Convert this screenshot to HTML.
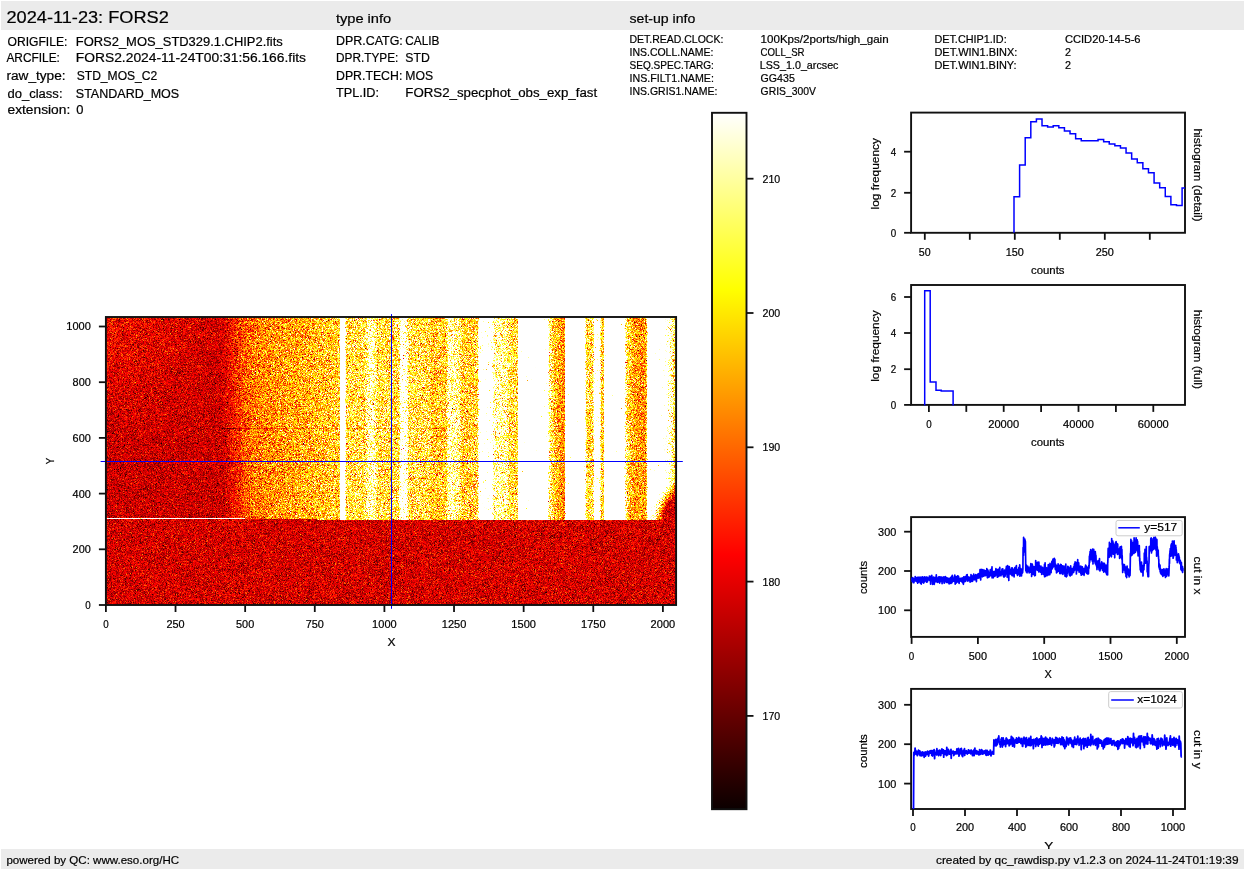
<!DOCTYPE html>
<html><head><meta charset="utf-8"><style>
html,body{margin:0;padding:0;background:#fff;width:1245px;height:870px;overflow:hidden}
#hm{position:absolute;left:106px;top:317px;width:570px;height:288px;image-rendering:pixelated}
#hmbg{position:absolute;left:106px;top:317px;width:570px;height:201px;background:linear-gradient(to right,rgb(197,5,0) 0px,rgb(198,4,0) 2px,rgb(197,4,0) 4px,rgb(197,5,0) 6px,rgb(198,4,0) 8px,rgb(198,5,0) 10px,rgb(198,4,0) 12px,rgb(197,4,0) 14px,rgb(196,4,0) 16px,rgb(198,5,0) 18px,rgb(198,5,0) 20px,rgb(197,4,0) 22px,rgb(197,5,0) 24px,rgb(198,4,0) 26px,rgb(197,4,0) 28px,rgb(198,5,0) 30px,rgb(198,5,0) 32px,rgb(199,5,0) 34px,rgb(198,5,0) 36px,rgb(197,5,0) 38px,rgb(197,5,0) 40px,rgb(198,4,0) 42px,rgb(198,5,0) 44px,rgb(198,5,0) 46px,rgb(198,4,0) 48px,rgb(198,5,0) 50px,rgb(198,5,0) 52px,rgb(198,5,0) 54px,rgb(197,4,0) 56px,rgb(199,5,0) 58px,rgb(199,5,0) 60px,rgb(198,5,0) 62px,rgb(198,5,0) 64px,rgb(197,4,0) 66px,rgb(197,5,0) 68px,rgb(197,5,0) 70px,rgb(197,4,0) 72px,rgb(199,5,0) 74px,rgb(198,4,0) 76px,rgb(197,4,0) 78px,rgb(198,4,0) 80px,rgb(199,5,0) 82px,rgb(198,4,0) 84px,rgb(197,4,0) 86px,rgb(199,5,0) 88px,rgb(197,5,0) 90px,rgb(198,4,0) 92px,rgb(197,5,0) 94px,rgb(199,5,0) 96px,rgb(197,4,0) 98px,rgb(197,4,0) 100px,rgb(198,5,0) 102px,rgb(199,4,0) 104px,rgb(198,5,0) 106px,rgb(196,4,0) 108px,rgb(198,4,0) 110px,rgb(196,4,0) 112px,rgb(198,5,0) 114px,rgb(206,8,0) 116px,rgb(210,11,0) 118px,rgb(216,15,0) 120px,rgb(221,20,0) 122px,rgb(226,26,0) 124px,rgb(231,33,0) 126px,rgb(234,41,0) 128px,rgb(237,50,0) 130px,rgb(241,60,0) 132px,rgb(244,74,0) 134px,rgb(245,84,1) 136px,rgb(246,92,1) 138px,rgb(248,101,1) 140px,rgb(247,102,2) 142px,rgb(249,112,3) 144px,rgb(250,119,4) 146px,rgb(250,121,5) 148px,rgb(250,128,5) 150px,rgb(250,130,6) 152px,rgb(251,131,7) 154px,rgb(250,133,8) 156px,rgb(251,136,8) 158px,rgb(251,141,10) 160px,rgb(251,144,11) 162px,rgb(251,144,12) 164px,rgb(251,144,11) 166px,rgb(251,147,12) 168px,rgb(251,147,11) 170px,rgb(252,150,12) 172px,rgb(252,154,14) 174px,rgb(252,154,16) 176px,rgb(252,156,18) 178px,rgb(252,157,16) 180px,rgb(252,158,17) 182px,rgb(252,162,19) 184px,rgb(252,164,19) 186px,rgb(253,166,20) 188px,rgb(252,166,21) 190px,rgb(253,169,24) 192px,rgb(253,170,25) 194px,rgb(253,173,25) 196px,rgb(253,173,25) 198px,rgb(253,174,27) 200px,rgb(253,177,28) 202px,rgb(253,177,30) 204px,rgb(253,179,31) 206px,rgb(253,183,34) 208px,rgb(253,183,33) 210px,rgb(253,186,35) 212px,rgb(253,186,35) 214px,rgb(253,186,39) 216px,rgb(253,189,41) 218px,rgb(253,192,42) 220px,rgb(253,188,40) 222px,rgb(254,193,43) 224px,rgb(253,194,45) 226px,rgb(253,194,48) 228px,rgb(253,193,44) 230px,rgb(253,197,48) 232px,rgb(255,255,254) 234px,rgb(255,254,254) 236px,rgb(255,255,254) 238px,rgb(254,214,75) 240px,rgb(254,215,76) 242px,rgb(254,213,76) 244px,rgb(254,214,76) 246px,rgb(254,216,76) 248px,rgb(254,214,75) 250px,rgb(254,214,75) 252px,rgb(254,213,77) 254px,rgb(254,214,76) 256px,rgb(254,215,76) 258px,rgb(254,232,122) 260px,rgb(254,243,165) 262px,rgb(254,245,173) 264px,rgb(254,246,175) 266px,rgb(254,242,158) 268px,rgb(254,231,114) 270px,rgb(254,216,76) 272px,rgb(254,214,77) 274px,rgb(254,215,76) 276px,rgb(254,215,75) 278px,rgb(254,214,74) 280px,rgb(254,217,78) 282px,rgb(254,215,76) 284px,rgb(254,217,79) 286px,rgb(254,213,75) 288px,rgb(254,213,74) 290px,rgb(254,214,77) 292px,rgb(254,251,215) 294px,rgb(254,253,230) 296px,rgb(255,253,235) 298px,rgb(255,252,222) 300px,rgb(254,228,105) 302px,rgb(254,218,84) 304px,rgb(254,218,83) 306px,rgb(254,218,86) 308px,rgb(254,218,83) 310px,rgb(254,217,81) 312px,rgb(254,215,80) 314px,rgb(254,217,79) 316px,rgb(254,217,79) 318px,rgb(254,215,77) 320px,rgb(254,215,75) 322px,rgb(254,209,66) 324px,rgb(253,189,41) 326px,rgb(253,193,44) 328px,rgb(253,191,42) 330px,rgb(254,194,45) 332px,rgb(253,195,44) 334px,rgb(253,196,49) 336px,rgb(254,198,49) 338px,rgb(254,203,57) 340px,rgb(254,246,174) 342px,rgb(254,244,168) 344px,rgb(254,243,164) 346px,rgb(254,242,158) 348px,rgb(254,239,144) 350px,rgb(254,234,126) 352px,rgb(254,229,107) 354px,rgb(254,198,51) 356px,rgb(254,201,52) 358px,rgb(254,201,52) 360px,rgb(254,201,55) 362px,rgb(254,205,57) 364px,rgb(254,205,61) 366px,rgb(254,208,64) 368px,rgb(254,209,65) 370px,rgb(254,247,186) 372px,rgb(255,254,251) 374px,rgb(255,254,252) 376px,rgb(255,254,253) 378px,rgb(255,254,253) 380px,rgb(255,254,252) 382px,rgb(255,254,251) 384px,rgb(255,254,240) 386px,rgb(254,245,177) 388px,rgb(254,245,172) 390px,rgb(254,243,164) 392px,rgb(254,243,165) 394px,rgb(254,241,159) 396px,rgb(254,243,159) 398px,rgb(254,240,152) 400px,rgb(254,229,114) 402px,rgb(254,214,75) 404px,rgb(254,214,75) 406px,rgb(254,215,75) 408px,rgb(254,215,74) 410px,rgb(255,254,252) 412px,rgb(255,254,254) 414px,rgb(255,254,254) 416px,rgb(255,254,254) 418px,rgb(255,254,254) 420px,rgb(255,255,254) 422px,rgb(255,254,254) 424px,rgb(255,255,254) 426px,rgb(255,254,254) 428px,rgb(255,255,254) 430px,rgb(255,254,254) 432px,rgb(255,254,254) 434px,rgb(255,255,254) 436px,rgb(255,254,254) 438px,rgb(255,254,254) 440px,rgb(254,252,220) 442px,rgb(254,234,127) 444px,rgb(254,220,87) 446px,rgb(253,197,49) 448px,rgb(253,183,36) 450px,rgb(253,172,24) 452px,rgb(252,158,17) 454px,rgb(251,141,10) 456px,rgb(252,138,9) 458px,rgb(255,254,254) 460px,rgb(255,254,254) 462px,rgb(255,255,254) 464px,rgb(255,255,254) 466px,rgb(255,255,254) 468px,rgb(255,254,254) 470px,rgb(255,255,254) 472px,rgb(255,255,254) 474px,rgb(255,254,254) 476px,rgb(255,254,253) 478px,rgb(254,214,73) 480px,rgb(254,215,77) 482px,rgb(254,215,75) 484px,rgb(254,215,75) 486px,rgb(255,254,245) 488px,rgb(255,254,250) 490px,rgb(255,254,249) 492px,rgb(254,246,180) 494px,rgb(254,204,59) 496px,rgb(254,254,245) 498px,rgb(255,255,254) 500px,rgb(255,255,254) 502px,rgb(255,255,254) 504px,rgb(255,255,254) 506px,rgb(255,255,254) 508px,rgb(255,255,254) 510px,rgb(255,255,254) 512px,rgb(255,254,254) 514px,rgb(255,254,254) 516px,rgb(255,254,250) 518px,rgb(254,235,130) 520px,rgb(254,203,54) 522px,rgb(253,193,42) 524px,rgb(253,179,29) 526px,rgb(252,165,20) 528px,rgb(252,160,19) 530px,rgb(252,156,16) 532px,rgb(252,155,15) 534px,rgb(252,152,15) 536px,rgb(251,149,13) 538px,rgb(253,192,44) 540px,rgb(255,254,254) 542px,rgb(255,255,254) 544px,rgb(255,255,254) 546px,rgb(255,255,254) 548px,rgb(255,254,254) 550px,rgb(255,254,254) 552px,rgb(255,254,254) 554px,rgb(255,254,253) 556px,rgb(255,254,251) 558px,rgb(254,254,243) 560px,rgb(254,253,230) 562px,rgb(254,250,201) 564px,rgb(254,241,153) 566px,rgb(254,223,96) 568px,rgb(254,196,48) 570px)}
#hmbg2{position:absolute;left:106px;top:518px;width:570px;height:87px;background:rgb(199,5,0)}
svg{position:absolute;left:0;top:0}
text{font-family:"Liberation Sans",sans-serif;stroke:#000;stroke-width:0.2px}
</style></head><body>
<div id="hmbg"></div><div id="hmbg2"></div>
<canvas id="hm" width="570" height="288"></canvas>
<svg width="1245" height="870" viewBox="0 0 1245 870">
<rect x="1" y="1" width="1243" height="29" fill="#ebebeb"/>
<text x="6.50" y="22.90" font-size="16.2" textLength="162.30" lengthAdjust="spacingAndGlyphs" fill="#000" >2024-11-23: FORS2</text>
<text x="335.90" y="23.10" font-size="13.4" textLength="55.30" lengthAdjust="spacingAndGlyphs" fill="#000" >type info</text>
<text x="629.50" y="23.10" font-size="13.4" textLength="65.80" lengthAdjust="spacingAndGlyphs" fill="#000" >set-up info</text>
<text x="7.50" y="45.70" font-size="12" textLength="59.90" lengthAdjust="spacingAndGlyphs" fill="#000" >ORIGFILE:</text>
<text x="75.80" y="45.70" font-size="12" textLength="207.00" lengthAdjust="spacingAndGlyphs" fill="#000" >FORS2_MOS_STD329.1.CHIP2.fits</text>
<text x="6.40" y="61.90" font-size="12" textLength="53.50" lengthAdjust="spacingAndGlyphs" fill="#000" >ARCFILE:</text>
<text x="75.80" y="61.90" font-size="12" textLength="230.20" lengthAdjust="spacingAndGlyphs" fill="#000" >FORS2.2024-11-24T00:31:56.166.fits</text>
<text x="6.40" y="79.50" font-size="12" textLength="59.20" lengthAdjust="spacingAndGlyphs" fill="#000" >raw_type:</text>
<text x="76.70" y="79.50" font-size="12" textLength="80.60" lengthAdjust="spacingAndGlyphs" fill="#000" >STD_MOS_C2</text>
<text x="7.50" y="97.50" font-size="12" textLength="55.00" lengthAdjust="spacingAndGlyphs" fill="#000" >do_class:</text>
<text x="75.80" y="97.50" font-size="12" textLength="103.40" lengthAdjust="spacingAndGlyphs" fill="#000" >STANDARD_MOS</text>
<text x="7.50" y="113.50" font-size="12" textLength="62.70" lengthAdjust="spacingAndGlyphs" fill="#000" >extension:</text>
<text x="76.30" y="113.50" font-size="12" textLength="7.20" lengthAdjust="spacingAndGlyphs" fill="#000" >0</text>
<text x="336.00" y="45.00" font-size="12" textLength="66.80" lengthAdjust="spacingAndGlyphs" fill="#000" >DPR.CATG:</text>
<text x="405.30" y="45.00" font-size="12" textLength="34.20" lengthAdjust="spacingAndGlyphs" fill="#000" >CALIB</text>
<text x="336.00" y="62.20" font-size="12" textLength="62.40" lengthAdjust="spacingAndGlyphs" fill="#000" >DPR.TYPE:</text>
<text x="405.30" y="62.20" font-size="12" textLength="24.50" lengthAdjust="spacingAndGlyphs" fill="#000" >STD</text>
<text x="336.00" y="80.20" font-size="12" textLength="66.30" lengthAdjust="spacingAndGlyphs" fill="#000" >DPR.TECH:</text>
<text x="405.30" y="80.20" font-size="12" textLength="27.80" lengthAdjust="spacingAndGlyphs" fill="#000" >MOS</text>
<text x="336.00" y="97.20" font-size="12" textLength="43.00" lengthAdjust="spacingAndGlyphs" fill="#000" >TPL.ID:</text>
<text x="405.30" y="97.20" font-size="12" textLength="191.80" lengthAdjust="spacingAndGlyphs" fill="#000" >FORS2_specphot_obs_exp_fast</text>
<text x="629.50" y="42.90" font-size="10.3" textLength="93.80" lengthAdjust="spacingAndGlyphs" fill="#000" >DET.READ.CLOCK:</text>
<text x="760.60" y="42.90" font-size="10.3" textLength="128.00" lengthAdjust="spacingAndGlyphs" fill="#000" >100Kps/2ports/high_gain</text>
<text x="629.50" y="55.70" font-size="10.3" textLength="83.90" lengthAdjust="spacingAndGlyphs" fill="#000" >INS.COLL.NAME:</text>
<text x="760.60" y="55.70" font-size="10.3" textLength="44.00" lengthAdjust="spacingAndGlyphs" fill="#000" >COLL_SR</text>
<text x="629.50" y="68.60" font-size="10.3" textLength="84.40" lengthAdjust="spacingAndGlyphs" fill="#000" >SEQ.SPEC.TARG:</text>
<text x="759.70" y="68.60" font-size="10.3" textLength="78.80" lengthAdjust="spacingAndGlyphs" fill="#000" >LSS_1.0_arcsec</text>
<text x="629.50" y="81.80" font-size="10.3" textLength="84.40" lengthAdjust="spacingAndGlyphs" fill="#000" >INS.FILT1.NAME:</text>
<text x="760.60" y="81.80" font-size="10.3" textLength="34.20" lengthAdjust="spacingAndGlyphs" fill="#000" >GG435</text>
<text x="629.50" y="94.90" font-size="10.3" textLength="88.00" lengthAdjust="spacingAndGlyphs" fill="#000" >INS.GRIS1.NAME:</text>
<text x="760.60" y="94.90" font-size="10.3" textLength="55.30" lengthAdjust="spacingAndGlyphs" fill="#000" >GRIS_300V</text>
<text x="934.40" y="43.10" font-size="10.3" textLength="72.30" lengthAdjust="spacingAndGlyphs" fill="#000" >DET.CHIP1.ID:</text>
<text x="1064.90" y="43.10" font-size="10.3" textLength="75.70" lengthAdjust="spacingAndGlyphs" fill="#000" >CCID20-14-5-6</text>
<text x="934.40" y="56.10" font-size="10.3" textLength="83.00" lengthAdjust="spacingAndGlyphs" fill="#000" >DET.WIN1.BINX:</text>
<text x="1064.90" y="56.10" font-size="10.3" textLength="6.00" lengthAdjust="spacingAndGlyphs" fill="#000" >2</text>
<text x="934.40" y="69.20" font-size="10.3" textLength="82.20" lengthAdjust="spacingAndGlyphs" fill="#000" >DET.WIN1.BINY:</text>
<text x="1064.90" y="69.20" font-size="10.3" textLength="6.00" lengthAdjust="spacingAndGlyphs" fill="#000" >2</text>
<line x1="100.6" y1="461.5" x2="682.8" y2="461.5" stroke="#0000ff" stroke-width="1"/>
<line x1="391.5" y1="314.1" x2="391.5" y2="608.8" stroke="#0000ff" stroke-width="1"/>
<rect x="105.9" y="317.0" width="570.2" height="288.0" fill="none" stroke="#111111" stroke-width="1.9"/>
<line x1="105.90" y1="605.00" x2="105.90" y2="612.00" stroke="#111111" stroke-width="1.8"/>
<text x="103.17" y="628.30" font-size="10.5" textLength="5.46" lengthAdjust="spacingAndGlyphs" fill="#000" >0</text>
<line x1="175.53" y1="605.00" x2="175.53" y2="612.00" stroke="#111111" stroke-width="1.8"/>
<text x="166.44" y="628.30" font-size="10.5" textLength="18.18" lengthAdjust="spacingAndGlyphs" fill="#000" >250</text>
<line x1="245.15" y1="605.00" x2="245.15" y2="612.00" stroke="#111111" stroke-width="1.8"/>
<text x="236.06" y="628.30" font-size="10.5" textLength="18.18" lengthAdjust="spacingAndGlyphs" fill="#000" >500</text>
<line x1="314.78" y1="605.00" x2="314.78" y2="612.00" stroke="#111111" stroke-width="1.8"/>
<text x="305.69" y="628.30" font-size="10.5" textLength="18.18" lengthAdjust="spacingAndGlyphs" fill="#000" >750</text>
<line x1="384.40" y1="605.00" x2="384.40" y2="612.00" stroke="#111111" stroke-width="1.8"/>
<text x="372.13" y="628.30" font-size="10.5" textLength="24.54" lengthAdjust="spacingAndGlyphs" fill="#000" >1000</text>
<line x1="454.03" y1="605.00" x2="454.03" y2="612.00" stroke="#111111" stroke-width="1.8"/>
<text x="441.76" y="628.30" font-size="10.5" textLength="24.54" lengthAdjust="spacingAndGlyphs" fill="#000" >1250</text>
<line x1="523.65" y1="605.00" x2="523.65" y2="612.00" stroke="#111111" stroke-width="1.8"/>
<text x="511.38" y="628.30" font-size="10.5" textLength="24.54" lengthAdjust="spacingAndGlyphs" fill="#000" >1500</text>
<line x1="593.28" y1="605.00" x2="593.28" y2="612.00" stroke="#111111" stroke-width="1.8"/>
<text x="581.01" y="628.30" font-size="10.5" textLength="24.54" lengthAdjust="spacingAndGlyphs" fill="#000" >1750</text>
<line x1="662.90" y1="605.00" x2="662.90" y2="612.00" stroke="#111111" stroke-width="1.8"/>
<text x="650.63" y="628.30" font-size="10.5" textLength="24.54" lengthAdjust="spacingAndGlyphs" fill="#000" >2000</text>
<line x1="98.90" y1="605.00" x2="105.90" y2="605.00" stroke="#111111" stroke-width="1.8"/>
<text x="85.34" y="608.90" font-size="10.5" textLength="5.46" lengthAdjust="spacingAndGlyphs" fill="#000" >0</text>
<line x1="98.90" y1="549.30" x2="105.90" y2="549.30" stroke="#111111" stroke-width="1.8"/>
<text x="72.62" y="553.20" font-size="10.5" textLength="18.18" lengthAdjust="spacingAndGlyphs" fill="#000" >200</text>
<line x1="98.90" y1="493.60" x2="105.90" y2="493.60" stroke="#111111" stroke-width="1.8"/>
<text x="72.62" y="497.50" font-size="10.5" textLength="18.18" lengthAdjust="spacingAndGlyphs" fill="#000" >400</text>
<line x1="98.90" y1="437.90" x2="105.90" y2="437.90" stroke="#111111" stroke-width="1.8"/>
<text x="72.62" y="441.80" font-size="10.5" textLength="18.18" lengthAdjust="spacingAndGlyphs" fill="#000" >600</text>
<line x1="98.90" y1="382.20" x2="105.90" y2="382.20" stroke="#111111" stroke-width="1.8"/>
<text x="72.62" y="386.10" font-size="10.5" textLength="18.18" lengthAdjust="spacingAndGlyphs" fill="#000" >800</text>
<line x1="98.90" y1="326.50" x2="105.90" y2="326.50" stroke="#111111" stroke-width="1.8"/>
<text x="66.26" y="330.40" font-size="10.5" textLength="24.54" lengthAdjust="spacingAndGlyphs" fill="#000" >1000</text>
<text x="387.50" y="645.80" font-size="10.5" textLength="8.00" lengthAdjust="spacingAndGlyphs" fill="#000" >X</text>
<text x="0" y="0" font-size="10.5" text-anchor="middle" dominant-baseline="central" textLength="6.60" lengthAdjust="spacingAndGlyphs" fill="#000" transform="translate(49.80,460.90) rotate(-90)">Y</text>
<defs><linearGradient id="hot" x1="0" y1="1" x2="0" y2="0"><stop offset="0" stop-color="rgb(11,0,0)"/><stop offset="0.365079" stop-color="rgb(255,0,0)"/><stop offset="0.746032" stop-color="rgb(255,255,0)"/><stop offset="1" stop-color="rgb(255,255,255)"/></linearGradient></defs>
<rect x="712.0" y="112.8" width="34.5" height="696.4000000000001" fill="url(#hot)"/>
<rect x="712.0" y="112.8" width="34.5" height="696.4000000000001" fill="none" stroke="#111111" stroke-width="1.9"/>
<line x1="746.50" y1="715.90" x2="753.50" y2="715.90" stroke="#111111" stroke-width="1.8"/>
<text x="762.50" y="719.80" font-size="10.5" textLength="17.70" lengthAdjust="spacingAndGlyphs" fill="#000" >170</text>
<line x1="746.50" y1="581.60" x2="753.50" y2="581.60" stroke="#111111" stroke-width="1.8"/>
<text x="762.50" y="585.50" font-size="10.5" textLength="17.70" lengthAdjust="spacingAndGlyphs" fill="#000" >180</text>
<line x1="746.50" y1="447.30" x2="753.50" y2="447.30" stroke="#111111" stroke-width="1.8"/>
<text x="762.50" y="451.20" font-size="10.5" textLength="17.70" lengthAdjust="spacingAndGlyphs" fill="#000" >190</text>
<line x1="746.50" y1="313.00" x2="753.50" y2="313.00" stroke="#111111" stroke-width="1.8"/>
<text x="762.50" y="316.90" font-size="10.5" textLength="17.70" lengthAdjust="spacingAndGlyphs" fill="#000" >200</text>
<line x1="746.50" y1="178.70" x2="753.50" y2="178.70" stroke="#111111" stroke-width="1.8"/>
<text x="762.50" y="182.60" font-size="10.5" textLength="17.70" lengthAdjust="spacingAndGlyphs" fill="#000" >210</text>
<rect x="911.1" y="112.6" width="273.9" height="120.20000000000002" fill="none" stroke="#111111" stroke-width="1.9"/>
<line x1="924.80" y1="232.80" x2="924.80" y2="239.80" stroke="#111111" stroke-width="1.8"/>
<text x="918.89" y="256.30" font-size="10.5" textLength="11.82" lengthAdjust="spacingAndGlyphs" fill="#000" >50</text>
<line x1="969.80" y1="232.80" x2="969.80" y2="239.80" stroke="#111111" stroke-width="1.8"/>
<line x1="1014.80" y1="232.80" x2="1014.80" y2="239.80" stroke="#111111" stroke-width="1.8"/>
<text x="1005.71" y="256.30" font-size="10.5" textLength="18.18" lengthAdjust="spacingAndGlyphs" fill="#000" >150</text>
<line x1="1059.80" y1="232.80" x2="1059.80" y2="239.80" stroke="#111111" stroke-width="1.8"/>
<line x1="1104.80" y1="232.80" x2="1104.80" y2="239.80" stroke="#111111" stroke-width="1.8"/>
<text x="1095.71" y="256.30" font-size="10.5" textLength="18.18" lengthAdjust="spacingAndGlyphs" fill="#000" >250</text>
<line x1="1149.80" y1="232.80" x2="1149.80" y2="239.80" stroke="#111111" stroke-width="1.8"/>
<line x1="904.10" y1="232.80" x2="911.10" y2="232.80" stroke="#111111" stroke-width="1.8"/>
<text x="890.84" y="236.70" font-size="10.5" textLength="5.46" lengthAdjust="spacingAndGlyphs" fill="#000" >0</text>
<line x1="904.10" y1="192.80" x2="911.10" y2="192.80" stroke="#111111" stroke-width="1.8"/>
<text x="890.84" y="196.70" font-size="10.5" textLength="5.46" lengthAdjust="spacingAndGlyphs" fill="#000" >2</text>
<line x1="904.10" y1="151.70" x2="911.10" y2="151.70" stroke="#111111" stroke-width="1.8"/>
<text x="890.84" y="155.60" font-size="10.5" textLength="5.46" lengthAdjust="spacingAndGlyphs" fill="#000" >4</text>
<text x="1031.00" y="274.30" font-size="10.5" textLength="33.50" lengthAdjust="spacingAndGlyphs" fill="#000" >counts</text>
<text x="0" y="0" font-size="10.5" text-anchor="middle" dominant-baseline="central" textLength="71.50" lengthAdjust="spacingAndGlyphs" fill="#000" transform="translate(874.80,173.75) rotate(-90)">log frequency</text>
<text x="0" y="0" font-size="10.5" text-anchor="middle" dominant-baseline="central" textLength="93.20" lengthAdjust="spacingAndGlyphs" fill="#000" transform="translate(1197.50,175.00) rotate(90)">histogram (detail)</text>
<defs><clipPath id="c1"><rect x="911.1" y="112.6" width="273.9" height="120.20000000000002"/></clipPath></defs>
<polyline points="1014.00,233.30 1014.00,196.80 1019.60,196.80 1019.60,164.90 1025.21,164.90 1025.21,137.80 1030.81,137.80 1030.81,121.70 1036.41,121.70 1036.41,119.00 1042.02,119.00 1042.02,125.70 1047.62,125.70 1047.62,127.00 1053.22,127.00 1053.22,125.70 1058.82,125.70 1058.82,127.80 1064.43,127.80 1064.43,130.90 1070.03,130.90 1070.03,133.80 1075.63,133.80 1075.63,138.70 1081.24,138.70 1081.24,140.80 1086.84,140.80 1086.84,140.80 1092.44,140.80 1092.44,140.80 1098.05,140.80 1098.05,139.60 1103.65,139.60 1103.65,141.80 1109.25,141.80 1109.25,144.00 1114.85,144.00 1114.85,145.80 1120.46,145.80 1120.46,148.00 1126.06,148.00 1126.06,152.90 1131.66,152.90 1131.66,158.90 1137.27,158.90 1137.27,162.80 1142.87,162.80 1142.87,168.80 1148.47,168.80 1148.47,172.80 1154.08,172.80 1154.08,183.00 1159.68,183.00 1159.68,187.70 1165.28,187.70 1165.28,196.60 1170.88,196.60 1170.88,204.80 1176.49,204.80 1176.49,205.60 1182.09,205.60 1182.09,187.90 1187.69,187.90" fill="none" stroke="#0000ff" stroke-width="1.5" clip-path="url(#c1)"/>
<rect x="911.1" y="285.0" width="273.9" height="119.89999999999998" fill="none" stroke="#111111" stroke-width="1.9"/>
<line x1="928.90" y1="404.90" x2="928.90" y2="411.90" stroke="#111111" stroke-width="1.8"/>
<text x="926.17" y="428.30" font-size="10.5" textLength="5.46" lengthAdjust="spacingAndGlyphs" fill="#000" >0</text>
<line x1="966.30" y1="404.90" x2="966.30" y2="411.90" stroke="#111111" stroke-width="1.8"/>
<line x1="1003.70" y1="404.90" x2="1003.70" y2="411.90" stroke="#111111" stroke-width="1.8"/>
<text x="988.25" y="428.30" font-size="10.5" textLength="30.90" lengthAdjust="spacingAndGlyphs" fill="#000" >20000</text>
<line x1="1041.10" y1="404.90" x2="1041.10" y2="411.90" stroke="#111111" stroke-width="1.8"/>
<line x1="1078.50" y1="404.90" x2="1078.50" y2="411.90" stroke="#111111" stroke-width="1.8"/>
<text x="1063.05" y="428.30" font-size="10.5" textLength="30.90" lengthAdjust="spacingAndGlyphs" fill="#000" >40000</text>
<line x1="1115.90" y1="404.90" x2="1115.90" y2="411.90" stroke="#111111" stroke-width="1.8"/>
<line x1="1153.30" y1="404.90" x2="1153.30" y2="411.90" stroke="#111111" stroke-width="1.8"/>
<text x="1137.85" y="428.30" font-size="10.5" textLength="30.90" lengthAdjust="spacingAndGlyphs" fill="#000" >60000</text>
<line x1="904.10" y1="404.90" x2="911.10" y2="404.90" stroke="#111111" stroke-width="1.8"/>
<text x="890.84" y="408.80" font-size="10.5" textLength="5.46" lengthAdjust="spacingAndGlyphs" fill="#000" >0</text>
<line x1="904.10" y1="369.20" x2="911.10" y2="369.20" stroke="#111111" stroke-width="1.8"/>
<text x="890.84" y="373.10" font-size="10.5" textLength="5.46" lengthAdjust="spacingAndGlyphs" fill="#000" >2</text>
<line x1="904.10" y1="333.00" x2="911.10" y2="333.00" stroke="#111111" stroke-width="1.8"/>
<text x="890.84" y="336.90" font-size="10.5" textLength="5.46" lengthAdjust="spacingAndGlyphs" fill="#000" >4</text>
<line x1="904.10" y1="297.00" x2="911.10" y2="297.00" stroke="#111111" stroke-width="1.8"/>
<text x="890.84" y="300.90" font-size="10.5" textLength="5.46" lengthAdjust="spacingAndGlyphs" fill="#000" >6</text>
<text x="1031.00" y="446.00" font-size="10.5" textLength="33.50" lengthAdjust="spacingAndGlyphs" fill="#000" >counts</text>
<text x="0" y="0" font-size="10.5" text-anchor="middle" dominant-baseline="central" textLength="71.40" lengthAdjust="spacingAndGlyphs" fill="#000" transform="translate(874.80,346.10) rotate(-90)">log frequency</text>
<text x="0" y="0" font-size="10.5" text-anchor="middle" dominant-baseline="central" textLength="79.30" lengthAdjust="spacingAndGlyphs" fill="#000" transform="translate(1197.50,349.35) rotate(90)">histogram (full)</text>
<polyline points="924.70,405.40 924.70,290.80 930.20,290.80 930.20,382.10 936.00,382.10 936.00,390.20 941.20,390.20 941.20,390.90 953.10,390.90 953.10,405.40" fill="none" stroke="#0000ff" stroke-width="1.5"/>
<rect x="911.1" y="517.1" width="273.9" height="119.79999999999995" fill="none" stroke="#111111" stroke-width="1.9"/>
<line x1="911.60" y1="636.90" x2="911.60" y2="643.90" stroke="#111111" stroke-width="1.8"/>
<text x="908.87" y="659.90" font-size="10.5" textLength="5.46" lengthAdjust="spacingAndGlyphs" fill="#000" >0</text>
<line x1="977.90" y1="636.90" x2="977.90" y2="643.90" stroke="#111111" stroke-width="1.8"/>
<text x="968.81" y="659.90" font-size="10.5" textLength="18.18" lengthAdjust="spacingAndGlyphs" fill="#000" >500</text>
<line x1="1044.20" y1="636.90" x2="1044.20" y2="643.90" stroke="#111111" stroke-width="1.8"/>
<text x="1031.93" y="659.90" font-size="10.5" textLength="24.54" lengthAdjust="spacingAndGlyphs" fill="#000" >1000</text>
<line x1="1110.50" y1="636.90" x2="1110.50" y2="643.90" stroke="#111111" stroke-width="1.8"/>
<text x="1098.23" y="659.90" font-size="10.5" textLength="24.54" lengthAdjust="spacingAndGlyphs" fill="#000" >1500</text>
<line x1="1176.80" y1="636.90" x2="1176.80" y2="643.90" stroke="#111111" stroke-width="1.8"/>
<text x="1164.53" y="659.90" font-size="10.5" textLength="24.54" lengthAdjust="spacingAndGlyphs" fill="#000" >2000</text>
<line x1="904.10" y1="610.30" x2="911.10" y2="610.30" stroke="#111111" stroke-width="1.8"/>
<text x="878.12" y="614.20" font-size="10.5" textLength="18.18" lengthAdjust="spacingAndGlyphs" fill="#000" >100</text>
<line x1="904.10" y1="571.00" x2="911.10" y2="571.00" stroke="#111111" stroke-width="1.8"/>
<text x="878.12" y="574.90" font-size="10.5" textLength="18.18" lengthAdjust="spacingAndGlyphs" fill="#000" >200</text>
<line x1="904.10" y1="531.70" x2="911.10" y2="531.70" stroke="#111111" stroke-width="1.8"/>
<text x="878.12" y="535.60" font-size="10.5" textLength="18.18" lengthAdjust="spacingAndGlyphs" fill="#000" >300</text>
<text x="1044.50" y="677.80" font-size="10.5" textLength="7.30" lengthAdjust="spacingAndGlyphs" fill="#000" >X</text>
<text x="0" y="0" font-size="10.5" text-anchor="middle" dominant-baseline="central" textLength="33.00" lengthAdjust="spacingAndGlyphs" fill="#000" transform="translate(862.60,577.50) rotate(-90)">counts</text>
<text x="0" y="0" font-size="10.5" text-anchor="middle" dominant-baseline="central" textLength="38.00" lengthAdjust="spacingAndGlyphs" fill="#000" transform="translate(1197.50,575.50) rotate(90)">cut in x</text>
<defs><clipPath id="c3"><rect x="911.1" y="517.1" width="273.9" height="119.79999999999995"/></clipPath></defs>
<polyline points="911.6,580.1 911.7,578.7 911.9,580.0 912.0,580.2 912.1,581.3 912.3,580.0 912.4,577.7 912.5,578.9 912.7,577.8 912.8,579.2 912.9,579.0 913.1,579.3 913.2,582.6 913.3,578.1 913.5,578.8 913.6,578.8 913.7,582.6 913.9,582.7 914.0,581.2 914.1,580.5 914.3,579.1 914.4,579.7 914.5,578.7 914.6,580.8 914.8,579.1 914.9,579.0 915.0,580.8 915.2,576.6 915.3,578.7 915.4,577.5 915.6,580.7 915.7,580.9 915.8,580.3 916.0,579.8 916.1,578.5 916.2,579.2 916.4,580.4 916.5,581.3 916.6,580.6 916.8,577.5 916.9,581.1 917.0,579.2 917.2,578.9 917.3,582.3 917.4,579.6 917.6,577.4 917.7,583.2 917.8,580.2 918.0,579.8 918.1,581.1 918.2,578.8 918.4,579.8 918.5,582.2 918.6,578.2 918.8,578.5 918.9,578.0 919.0,577.1 919.2,579.0 919.3,579.4 919.4,581.9 919.6,578.6 919.7,580.7 919.8,580.4 920.0,581.9 920.1,581.3 920.2,580.6 920.4,577.4 920.5,583.2 920.6,582.2 920.7,579.2 920.9,577.1 921.0,578.6 921.1,583.0 921.3,584.1 921.4,579.0 921.5,580.9 921.7,581.6 921.8,577.9 921.9,577.7 922.1,579.4 922.2,579.2 922.3,578.9 922.5,576.8 922.6,578.6 922.7,578.7 922.9,578.7 923.0,582.4 923.1,577.4 923.3,578.0 923.4,578.7 923.5,583.1 923.7,580.8 923.8,578.2 923.9,582.8 924.1,580.0 924.2,577.9 924.3,582.0 924.5,576.8 924.6,578.7 924.7,579.9 924.9,579.1 925.0,578.5 925.1,579.4 925.3,577.6 925.4,580.8 925.5,580.4 925.7,577.8 925.8,579.6 925.9,581.2 926.1,578.0 926.2,577.1 926.3,580.4 926.5,582.1 926.6,579.9 926.7,579.9 926.8,580.2 927.0,577.2 927.1,581.5 927.2,577.4 927.4,581.9 927.5,581.0 927.6,578.5 927.8,577.7 927.9,578.1 928.0,579.0 928.2,579.4 928.3,579.4 928.4,578.6 928.6,580.0 928.7,579.2 928.8,578.6 929.0,579.6 929.1,578.3 929.2,578.7 929.4,576.1 929.5,579.1 929.6,580.4 929.8,580.3 929.9,579.7 930.0,578.0 930.2,580.2 930.3,579.0 930.4,576.4 930.6,584.2 930.7,581.6 930.8,579.2 931.0,578.9 931.1,579.2 931.2,580.4 931.4,578.5 931.5,579.2 931.6,580.6 931.8,575.4 931.9,579.0 932.0,580.6 932.2,579.8 932.3,580.0 932.4,579.8 932.6,584.4 932.7,580.5 932.8,577.9 932.9,581.7 933.1,579.8 933.2,578.0 933.3,578.1 933.5,577.0 933.6,582.6 933.7,580.3 933.9,580.2 934.0,578.6 934.1,577.7 934.3,584.4 934.4,577.7 934.5,582.2 934.7,578.4 934.8,582.3 934.9,579.3 935.1,577.5 935.2,579.9 935.3,579.3 935.5,578.2 935.6,579.4 935.7,579.8 935.9,577.0 936.0,577.8 936.1,580.2 936.3,574.8 936.4,581.7 936.5,578.0 936.7,580.1 936.8,579.4 936.9,578.4 937.1,579.3 937.2,578.5 937.3,582.3 937.5,582.3 937.6,578.6 937.7,581.3 937.9,581.5 938.0,582.2 938.1,577.4 938.3,578.3 938.4,577.1 938.5,581.3 938.7,579.6 938.8,581.7 938.9,578.3 939.0,576.9 939.2,581.2 939.3,576.9 939.4,577.9 939.6,580.0 939.7,583.1 939.8,577.2 940.0,579.8 940.1,580.7 940.2,578.9 940.4,578.9 940.5,577.0 940.6,581.4 940.8,577.6 940.9,577.0 941.0,577.1 941.2,580.0 941.3,581.0 941.4,577.9 941.6,579.4 941.7,579.4 941.8,577.1 942.0,580.1 942.1,583.7 942.2,580.3 942.4,582.9 942.5,578.2 942.6,579.1 942.8,580.7 942.9,579.7 943.0,578.2 943.2,579.5 943.3,577.3 943.4,579.8 943.6,577.8 943.7,577.0 943.8,576.8 944.0,580.8 944.1,578.1 944.2,582.9 944.4,581.6 944.5,583.1 944.6,577.8 944.8,581.8 944.9,579.7 945.0,580.0 945.1,579.7 945.3,580.7 945.4,579.2 945.5,576.5 945.7,579.6 945.8,578.7 945.9,577.9 946.1,580.0 946.2,581.9 946.3,580.6 946.5,577.8 946.6,582.5 946.7,580.7 946.9,577.9 947.0,578.3 947.1,579.6 947.3,578.2 947.4,579.4 947.5,581.7 947.7,582.4 947.8,580.8 947.9,578.0 948.1,580.6 948.2,581.2 948.3,581.0 948.5,582.3 948.6,579.9 948.7,581.7 948.9,579.0 949.0,583.8 949.1,579.1 949.3,580.8 949.4,583.1 949.5,578.4 949.7,580.1 949.8,583.6 949.9,581.2 950.1,579.1 950.2,580.5 950.3,578.3 950.5,578.3 950.6,578.5 950.7,579.1 950.8,577.3 951.0,578.5 951.1,578.9 951.2,583.3 951.4,578.1 951.5,577.3 951.6,580.2 951.8,580.5 951.9,576.2 952.0,582.7 952.2,578.8 952.3,575.4 952.4,581.3 952.6,578.4 952.7,576.3 952.8,579.9 953.0,578.7 953.1,578.1 953.2,581.2 953.4,579.8 953.5,579.1 953.6,578.2 953.8,579.7 953.9,580.0 954.0,581.4 954.2,580.3 954.3,578.1 954.4,579.5 954.6,581.1 954.7,581.1 954.8,575.0 955.0,577.6 955.1,578.5 955.2,584.2 955.4,578.6 955.5,578.8 955.6,576.7 955.8,578.9 955.9,579.8 956.0,578.7 956.2,583.1 956.3,577.8 956.4,579.1 956.6,580.9 956.7,577.3 956.8,576.5 956.9,582.1 957.1,580.8 957.2,579.1 957.3,579.3 957.5,580.3 957.6,581.4 957.7,575.9 957.9,577.8 958.0,581.7 958.1,582.0 958.3,576.7 958.4,577.9 958.5,576.4 958.7,578.2 958.8,581.2 958.9,579.2 959.1,583.4 959.2,581.0 959.3,579.7 959.5,578.7 959.6,580.9 959.7,579.9 959.9,578.8 960.0,579.0 960.1,578.5 960.3,579.3 960.4,580.2 960.5,578.3 960.7,579.6 960.8,581.1 960.9,580.7 961.1,579.6 961.2,579.8 961.3,579.4 961.5,579.6 961.6,579.3 961.7,579.9 961.9,581.9 962.0,578.9 962.1,577.8 962.3,578.9 962.4,580.0 962.5,578.9 962.7,581.3 962.8,583.0 962.9,579.5 963.0,581.3 963.2,578.3 963.3,581.6 963.4,584.3 963.6,581.5 963.7,576.9 963.8,580.3 964.0,582.1 964.1,581.0 964.2,578.7 964.4,578.8 964.5,579.3 964.6,577.0 964.8,578.4 964.9,579.7 965.0,578.6 965.2,576.7 965.3,577.9 965.4,577.8 965.6,581.5 965.7,579.9 965.8,578.4 966.0,580.2 966.1,577.7 966.2,578.5 966.4,577.9 966.5,579.9 966.6,574.9 966.8,577.2 966.9,579.8 967.0,579.2 967.2,574.6 967.3,579.9 967.4,577.6 967.6,577.4 967.7,579.1 967.8,581.2 968.0,578.7 968.1,578.4 968.2,576.9 968.4,577.5 968.5,578.9 968.6,577.3 968.8,577.8 968.9,578.4 969.0,578.6 969.1,579.2 969.3,577.4 969.4,580.6 969.5,579.8 969.7,578.5 969.8,581.3 969.9,579.3 970.1,582.2 970.2,579.7 970.3,577.2 970.5,577.2 970.6,578.3 970.7,578.6 970.9,580.9 971.0,574.6 971.1,577.0 971.3,575.9 971.4,579.7 971.5,578.3 971.7,581.4 971.8,576.3 971.9,575.9 972.1,581.4 972.2,577.8 972.3,576.4 972.5,581.1 972.6,581.1 972.7,579.6 972.9,578.7 973.0,580.2 973.1,577.3 973.3,576.8 973.4,576.0 973.5,575.7 973.7,574.1 973.8,574.7 973.9,579.6 974.1,577.9 974.2,579.0 974.3,579.0 974.5,576.9 974.6,576.6 974.7,575.6 974.9,579.8 975.0,579.0 975.1,576.5 975.2,576.8 975.4,576.9 975.5,576.4 975.6,577.8 975.8,574.6 975.9,575.3 976.0,576.2 976.2,577.3 976.3,576.2 976.4,581.6 976.6,577.8 976.7,575.6 976.8,578.9 977.0,575.2 977.1,575.3 977.2,578.5 977.4,576.1 977.5,576.2 977.6,574.4 977.8,574.1 977.9,575.5 978.0,577.2 978.2,575.6 978.3,575.4 978.4,573.6 978.6,574.6 978.7,576.8 978.8,578.1 979.0,575.9 979.1,576.7 979.2,577.5 979.4,575.3 979.5,576.1 979.6,574.7 979.8,573.7 979.9,575.8 980.0,569.7 980.2,575.5 980.3,572.3 980.4,574.5 980.6,572.2 980.7,580.0 980.8,576.3 980.9,574.0 981.1,573.2 981.2,569.3 981.3,573.8 981.5,571.6 981.6,572.8 981.7,572.3 981.9,573.3 982.0,574.8 982.1,573.3 982.3,576.8 982.4,571.7 982.5,576.7 982.7,573.8 982.8,569.5 982.9,574.8 983.1,574.2 983.2,571.6 983.3,574.2 983.5,576.1 983.6,573.6 983.7,572.9 983.9,572.6 984.0,575.9 984.1,570.1 984.3,570.3 984.4,574.1 984.5,573.5 984.7,575.1 984.8,570.8 984.9,575.7 985.1,572.5 985.2,575.1 985.3,575.6 985.5,572.3 985.6,570.9 985.7,574.0 985.9,575.5 986.0,572.0 986.1,574.0 986.3,573.2 986.4,570.3 986.5,571.2 986.7,575.0 986.8,568.5 986.9,573.8 987.0,571.9 987.2,575.3 987.3,573.8 987.4,577.8 987.6,569.6 987.7,570.5 987.8,576.5 988.0,577.2 988.1,577.5 988.2,570.9 988.4,574.7 988.5,573.8 988.6,574.4 988.8,573.9 988.9,576.2 989.0,573.6 989.2,577.0 989.3,573.8 989.4,572.9 989.6,572.5 989.7,574.1 989.8,575.7 990.0,573.2 990.1,574.7 990.2,569.9 990.4,571.7 990.5,573.8 990.6,574.6 990.8,575.1 990.9,575.7 991.0,574.3 991.2,572.8 991.3,572.2 991.4,572.1 991.6,568.5 991.7,575.1 991.8,573.4 992.0,566.8 992.1,577.8 992.2,574.6 992.4,573.0 992.5,573.0 992.6,572.4 992.8,573.9 992.9,572.5 993.0,573.2 993.1,571.5 993.3,577.8 993.4,575.4 993.5,573.3 993.7,575.7 993.8,575.7 993.9,571.8 994.1,574.8 994.2,571.7 994.3,571.5 994.5,572.5 994.6,572.0 994.7,573.4 994.9,576.5 995.0,573.2 995.1,572.1 995.3,574.4 995.4,573.4 995.5,571.4 995.7,575.2 995.8,571.6 995.9,568.7 996.1,574.4 996.2,572.7 996.3,573.4 996.5,569.4 996.6,572.3 996.7,570.9 996.9,574.7 997.0,573.1 997.1,573.0 997.3,577.2 997.4,569.6 997.5,570.8 997.7,577.2 997.8,571.2 997.9,573.3 998.1,571.9 998.2,572.1 998.3,576.5 998.5,573.4 998.6,569.3 998.7,574.3 998.9,575.3 999.0,576.1 999.1,575.8 999.2,572.0 999.4,568.8 999.5,571.8 999.6,572.2 999.8,567.4 999.9,574.0 1000.0,574.4 1000.2,571.5 1000.3,571.4 1000.4,575.2 1000.6,575.5 1000.7,572.0 1000.8,572.1 1001.0,575.8 1001.1,573.2 1001.2,574.0 1001.4,571.6 1001.5,572.9 1001.6,572.8 1001.8,573.5 1001.9,570.1 1002.0,569.2 1002.2,573.5 1002.3,570.5 1002.4,574.4 1002.6,572.4 1002.7,570.7 1002.8,568.9 1003.0,573.5 1003.1,572.7 1003.2,572.0 1003.4,576.1 1003.5,572.4 1003.6,574.1 1003.8,571.6 1003.9,575.2 1004.0,577.2 1004.2,572.3 1004.3,571.8 1004.4,573.7 1004.6,570.2 1004.7,573.0 1004.8,573.8 1005.0,571.2 1005.1,576.2 1005.2,574.0 1005.3,572.4 1005.5,570.2 1005.6,572.7 1005.7,571.5 1005.9,573.9 1006.0,571.5 1006.1,568.2 1006.3,573.9 1006.4,566.4 1006.5,573.8 1006.7,572.2 1006.8,571.8 1006.9,569.7 1007.1,575.2 1007.2,577.3 1007.3,570.7 1007.5,570.2 1007.6,570.6 1007.7,565.7 1007.9,571.6 1008.0,571.5 1008.1,569.8 1008.3,571.2 1008.4,568.0 1008.5,575.1 1008.7,573.0 1008.8,580.5 1008.9,570.0 1009.1,572.9 1009.2,569.7 1009.3,566.7 1009.5,572.0 1009.6,572.6 1009.7,573.2 1009.9,574.0 1010.0,573.5 1010.1,570.4 1010.3,571.9 1010.4,571.8 1010.5,572.4 1010.7,569.7 1010.8,570.7 1010.9,572.2 1011.1,570.2 1011.2,572.3 1011.3,574.7 1011.4,568.2 1011.6,570.7 1011.7,574.2 1011.8,569.1 1012.0,571.0 1012.1,575.7 1012.2,567.8 1012.4,571.0 1012.5,569.6 1012.6,571.3 1012.8,572.1 1012.9,575.6 1013.0,569.3 1013.2,571.7 1013.3,572.4 1013.4,570.8 1013.6,571.5 1013.7,570.0 1013.8,572.6 1014.0,571.8 1014.1,577.0 1014.2,572.7 1014.4,570.0 1014.5,568.3 1014.6,572.5 1014.8,571.9 1014.9,567.6 1015.0,572.4 1015.2,569.7 1015.3,567.4 1015.4,571.5 1015.6,568.5 1015.7,573.3 1015.8,571.0 1016.0,571.7 1016.1,571.2 1016.2,568.7 1016.4,565.5 1016.5,573.2 1016.6,572.9 1016.8,570.2 1016.9,574.1 1017.0,570.2 1017.1,570.0 1017.3,572.1 1017.4,570.1 1017.5,575.3 1017.7,569.5 1017.8,575.3 1017.9,573.1 1018.1,572.8 1018.2,572.4 1018.3,569.2 1018.5,571.1 1018.6,572.3 1018.7,569.9 1018.9,567.3 1019.0,571.3 1019.1,570.4 1019.3,568.1 1019.4,570.6 1019.5,574.5 1019.7,564.9 1019.8,565.6 1019.9,576.2 1020.1,571.3 1020.2,570.1 1020.3,568.7 1020.5,569.5 1020.6,571.9 1020.7,573.8 1020.9,570.9 1021.0,568.5 1021.1,573.9 1021.3,573.7 1021.4,571.2 1021.5,576.0 1021.7,571.7 1021.8,572.2 1021.9,569.9 1022.1,572.8 1022.2,573.3 1022.3,572.0 1022.5,571.1 1022.6,572.7 1022.7,571.0 1022.9,568.7 1023.0,558.5 1023.1,547.6 1023.2,548.6 1023.4,547.0 1023.5,555.3 1023.6,537.3 1023.8,547.9 1023.9,545.0 1024.0,542.6 1024.2,550.2 1024.3,542.6 1024.4,544.5 1024.6,551.8 1024.7,542.9 1024.8,539.0 1025.0,551.6 1025.1,540.4 1025.2,542.7 1025.4,541.5 1025.5,550.6 1025.6,556.8 1025.8,570.4 1025.9,567.5 1026.0,570.9 1026.2,567.9 1026.3,572.0 1026.4,570.1 1026.6,565.3 1026.7,568.6 1026.8,570.2 1027.0,572.8 1027.1,571.9 1027.2,569.3 1027.4,567.3 1027.5,568.7 1027.6,568.4 1027.8,569.9 1027.9,566.3 1028.0,570.9 1028.2,571.3 1028.3,567.5 1028.4,569.7 1028.6,570.6 1028.7,571.3 1028.8,570.5 1029.0,568.2 1029.1,568.9 1029.2,573.0 1029.3,568.7 1029.5,569.3 1029.6,572.5 1029.7,567.8 1029.9,570.6 1030.0,570.7 1030.1,567.7 1030.3,566.3 1030.4,571.6 1030.5,568.7 1030.7,572.1 1030.8,563.7 1030.9,571.1 1031.1,566.7 1031.2,571.5 1031.3,567.7 1031.5,564.0 1031.6,576.5 1031.7,571.0 1031.9,568.5 1032.0,570.1 1032.1,571.6 1032.3,564.1 1032.4,569.6 1032.5,574.2 1032.7,567.6 1032.8,574.4 1032.9,566.8 1033.1,571.3 1033.2,569.4 1033.3,566.5 1033.5,569.5 1033.6,573.5 1033.7,574.3 1033.9,566.7 1034.0,567.9 1034.1,572.0 1034.3,567.6 1034.4,568.5 1034.5,568.1 1034.7,575.8 1034.8,570.6 1034.9,567.4 1035.1,567.5 1035.2,566.7 1035.3,575.4 1035.4,567.9 1035.6,566.7 1035.7,560.6 1035.8,570.0 1036.0,567.9 1036.1,566.5 1036.2,563.7 1036.4,567.5 1036.5,562.8 1036.6,568.3 1036.8,565.2 1036.9,567.4 1037.0,565.4 1037.2,567.8 1037.3,570.3 1037.4,562.4 1037.6,564.6 1037.7,567.1 1037.8,564.7 1038.0,562.3 1038.1,568.1 1038.2,565.4 1038.4,563.7 1038.5,563.9 1038.6,566.5 1038.8,571.9 1038.9,562.2 1039.0,565.1 1039.2,566.1 1039.3,567.1 1039.4,565.7 1039.6,567.8 1039.7,569.7 1039.8,569.0 1040.0,568.8 1040.1,569.2 1040.2,571.1 1040.4,566.5 1040.5,572.2 1040.6,567.3 1040.8,572.1 1040.9,568.9 1041.0,566.2 1041.2,569.3 1041.3,571.7 1041.4,569.7 1041.5,569.4 1041.7,574.4 1041.8,571.4 1041.9,569.4 1042.1,571.1 1042.2,569.6 1042.3,567.9 1042.5,567.8 1042.6,567.4 1042.7,568.3 1042.9,570.6 1043.0,569.9 1043.1,570.5 1043.3,570.6 1043.4,570.3 1043.5,574.4 1043.7,570.7 1043.8,569.9 1043.9,572.4 1044.1,569.9 1044.2,568.5 1044.3,570.3 1044.5,564.3 1044.6,576.7 1044.7,570.4 1044.9,574.6 1045.0,567.2 1045.1,562.8 1045.3,576.4 1045.4,569.5 1045.5,568.5 1045.7,570.6 1045.8,568.4 1045.9,575.7 1046.1,567.6 1046.2,568.8 1046.3,569.8 1046.5,571.4 1046.6,568.1 1046.7,571.1 1046.9,569.2 1047.0,571.2 1047.1,575.7 1047.2,569.9 1047.4,569.3 1047.5,567.8 1047.6,572.1 1047.8,569.9 1047.9,568.2 1048.0,569.4 1048.2,566.5 1048.3,564.6 1048.4,572.2 1048.6,574.9 1048.7,567.6 1048.8,565.8 1049.0,567.4 1049.1,567.7 1049.2,571.5 1049.4,571.7 1049.5,567.5 1049.6,572.2 1049.8,574.6 1049.9,572.5 1050.0,563.3 1050.2,564.8 1050.3,571.6 1050.4,571.7 1050.6,569.2 1050.7,571.8 1050.8,566.4 1051.0,570.0 1051.1,572.7 1051.2,565.0 1051.4,569.0 1051.5,565.4 1051.6,564.9 1051.8,564.6 1051.9,561.3 1052.0,564.3 1052.2,567.8 1052.3,568.8 1052.4,565.6 1052.6,563.8 1052.7,561.2 1052.8,560.8 1053.0,559.0 1053.1,560.2 1053.2,563.0 1053.3,562.5 1053.5,567.0 1053.6,560.8 1053.7,558.9 1053.9,559.0 1054.0,561.3 1054.1,561.7 1054.3,558.4 1054.4,561.6 1054.5,559.5 1054.7,560.3 1054.8,561.7 1054.9,559.3 1055.1,566.1 1055.2,566.4 1055.3,568.7 1055.5,569.6 1055.6,564.2 1055.7,564.7 1055.9,569.4 1056.0,567.9 1056.1,566.3 1056.3,567.3 1056.4,566.2 1056.5,572.8 1056.7,571.2 1056.8,568.3 1056.9,565.7 1057.1,569.2 1057.2,571.8 1057.3,570.4 1057.5,571.3 1057.6,571.8 1057.7,565.5 1057.9,571.2 1058.0,569.5 1058.1,563.8 1058.3,566.4 1058.4,568.6 1058.5,571.2 1058.7,568.5 1058.8,565.2 1058.9,567.9 1059.1,566.2 1059.2,569.3 1059.3,568.2 1059.4,570.1 1059.6,568.4 1059.7,566.1 1059.8,573.4 1060.0,569.8 1060.1,569.0 1060.2,571.1 1060.4,570.4 1060.5,567.5 1060.6,564.3 1060.8,568.0 1060.9,568.8 1061.0,573.7 1061.2,564.5 1061.3,569.4 1061.4,569.7 1061.6,572.6 1061.7,569.8 1061.8,572.6 1062.0,569.5 1062.1,568.4 1062.2,569.6 1062.4,568.9 1062.5,571.9 1062.6,565.9 1062.8,571.4 1062.9,574.5 1063.0,570.2 1063.2,571.7 1063.3,572.4 1063.4,570.7 1063.6,569.0 1063.7,572.9 1063.8,570.1 1064.0,566.0 1064.1,568.0 1064.2,570.2 1064.4,569.4 1064.5,570.1 1064.6,569.9 1064.8,567.8 1064.9,570.0 1065.0,576.1 1065.2,569.9 1065.3,572.1 1065.4,568.1 1065.5,571.4 1065.7,569.4 1065.8,564.1 1065.9,572.8 1066.1,573.2 1066.2,574.1 1066.3,576.9 1066.5,575.7 1066.6,570.2 1066.7,573.0 1066.9,576.1 1067.0,575.1 1067.1,569.8 1067.3,573.3 1067.4,572.3 1067.5,570.5 1067.7,567.9 1067.8,566.4 1067.9,568.7 1068.1,571.0 1068.2,570.8 1068.3,566.8 1068.5,567.7 1068.6,572.1 1068.7,570.1 1068.9,570.5 1069.0,571.1 1069.1,572.5 1069.3,574.6 1069.4,572.6 1069.5,575.1 1069.7,568.1 1069.8,569.9 1069.9,574.3 1070.1,567.7 1070.2,568.9 1070.3,576.0 1070.5,566.5 1070.6,569.1 1070.7,565.9 1070.9,574.3 1071.0,569.8 1071.1,570.1 1071.3,570.6 1071.4,570.7 1071.5,568.4 1071.6,574.9 1071.8,574.3 1071.9,574.6 1072.0,572.5 1072.2,572.6 1072.3,570.1 1072.4,570.4 1072.6,571.0 1072.7,572.8 1072.8,572.2 1073.0,568.6 1073.1,569.1 1073.2,570.8 1073.4,571.8 1073.5,567.1 1073.6,572.5 1073.8,568.6 1073.9,566.6 1074.0,569.7 1074.2,566.0 1074.3,570.7 1074.4,564.0 1074.6,565.6 1074.7,570.2 1074.8,563.6 1075.0,568.2 1075.1,561.9 1075.2,567.6 1075.4,566.2 1075.5,564.9 1075.6,566.7 1075.8,565.1 1075.9,567.5 1076.0,563.9 1076.2,565.9 1076.3,565.4 1076.4,574.0 1076.6,562.7 1076.7,566.0 1076.8,571.3 1077.0,565.9 1077.1,564.9 1077.2,563.1 1077.3,569.4 1077.5,561.9 1077.6,566.9 1077.7,559.7 1077.9,567.1 1078.0,564.8 1078.1,567.9 1078.3,570.1 1078.4,563.9 1078.5,564.5 1078.7,562.8 1078.8,564.8 1078.9,569.0 1079.1,572.1 1079.2,569.4 1079.3,569.5 1079.5,570.0 1079.6,566.2 1079.7,567.0 1079.9,568.7 1080.0,567.6 1080.1,568.6 1080.3,567.7 1080.4,566.5 1080.5,566.3 1080.7,571.1 1080.8,573.6 1080.9,566.2 1081.1,570.0 1081.2,567.8 1081.3,575.2 1081.5,571.8 1081.6,570.9 1081.7,574.6 1081.9,572.3 1082.0,569.1 1082.1,568.2 1082.3,566.8 1082.4,573.1 1082.5,574.5 1082.7,569.5 1082.8,568.4 1082.9,570.3 1083.1,574.1 1083.2,568.8 1083.3,568.8 1083.4,569.4 1083.6,572.0 1083.7,570.0 1083.8,568.7 1084.0,572.1 1084.1,575.4 1084.2,569.8 1084.4,569.4 1084.5,570.6 1084.6,568.4 1084.8,572.1 1084.9,570.8 1085.0,571.4 1085.2,569.1 1085.3,566.5 1085.4,571.2 1085.6,565.2 1085.7,566.6 1085.8,568.5 1086.0,569.0 1086.1,565.9 1086.2,570.9 1086.4,570.7 1086.5,573.2 1086.6,569.2 1086.8,566.9 1086.9,569.0 1087.0,569.3 1087.2,570.9 1087.3,569.9 1087.4,574.0 1087.6,567.6 1087.7,571.4 1087.8,573.2 1088.0,572.2 1088.1,572.4 1088.2,568.0 1088.4,567.5 1088.5,573.8 1088.6,567.8 1088.8,565.6 1088.9,567.6 1089.0,568.3 1089.2,564.1 1089.3,561.6 1089.4,556.2 1089.5,556.6 1089.7,562.4 1089.8,554.2 1089.9,560.4 1090.1,551.6 1090.2,559.1 1090.3,557.1 1090.5,557.6 1090.6,556.4 1090.7,549.6 1090.9,551.1 1091.0,551.9 1091.1,552.8 1091.3,559.5 1091.4,555.6 1091.5,555.7 1091.7,557.1 1091.8,551.6 1091.9,556.0 1092.1,556.0 1092.2,557.4 1092.3,561.2 1092.5,551.6 1092.6,549.0 1092.7,553.3 1092.9,557.6 1093.0,564.0 1093.1,553.7 1093.3,550.0 1093.4,553.5 1093.5,551.3 1093.7,549.4 1093.8,550.8 1093.9,556.5 1094.1,551.3 1094.2,552.4 1094.3,560.8 1094.5,556.8 1094.6,560.6 1094.7,556.0 1094.9,553.7 1095.0,559.6 1095.1,563.2 1095.3,551.5 1095.4,555.9 1095.5,553.5 1095.6,564.0 1095.8,557.3 1095.9,555.4 1096.0,556.9 1096.2,565.0 1096.3,564.7 1096.4,566.0 1096.6,562.6 1096.7,562.5 1096.8,565.3 1097.0,569.6 1097.1,563.5 1097.2,567.0 1097.4,563.9 1097.5,565.0 1097.6,561.0 1097.8,562.4 1097.9,567.1 1098.0,564.8 1098.2,560.7 1098.3,567.4 1098.4,564.6 1098.6,562.5 1098.7,562.3 1098.8,564.5 1099.0,569.8 1099.1,569.7 1099.2,565.3 1099.4,565.0 1099.5,558.7 1099.6,568.6 1099.8,562.9 1099.9,563.9 1100.0,571.0 1100.2,568.6 1100.3,565.8 1100.4,567.7 1100.6,566.7 1100.7,565.0 1100.8,568.7 1101.0,565.0 1101.1,568.2 1101.2,568.0 1101.4,564.9 1101.5,568.1 1101.6,565.7 1101.7,561.9 1101.9,566.5 1102.0,567.0 1102.1,564.5 1102.3,567.7 1102.4,563.6 1102.5,570.3 1102.7,565.2 1102.8,568.7 1102.9,569.9 1103.1,563.0 1103.2,570.6 1103.3,563.8 1103.5,567.1 1103.6,565.3 1103.7,572.1 1103.9,566.7 1104.0,566.0 1104.1,570.1 1104.3,570.2 1104.4,563.3 1104.5,569.4 1104.7,570.9 1104.8,571.5 1104.9,568.6 1105.1,568.9 1105.2,569.4 1105.3,565.3 1105.5,570.7 1105.6,568.6 1105.7,566.0 1105.9,572.5 1106.0,567.1 1106.1,565.0 1106.3,573.4 1106.4,572.7 1106.5,572.6 1106.7,574.7 1106.8,568.6 1106.9,574.7 1107.1,568.5 1107.2,566.0 1107.3,574.1 1107.5,570.7 1107.6,574.9 1107.7,562.7 1107.8,562.6 1108.0,556.3 1108.1,550.4 1108.2,548.4 1108.4,551.7 1108.5,550.3 1108.6,552.3 1108.8,549.7 1108.9,554.6 1109.0,549.7 1109.2,557.3 1109.3,551.7 1109.4,542.4 1109.6,549.4 1109.7,554.4 1109.8,548.5 1110.0,553.2 1110.1,555.7 1110.2,552.1 1110.4,546.3 1110.5,547.6 1110.6,549.4 1110.8,552.5 1110.9,553.0 1111.0,543.5 1111.2,547.7 1111.3,552.3 1111.4,556.8 1111.6,553.8 1111.7,538.6 1111.8,552.8 1112.0,548.5 1112.1,547.3 1112.2,548.6 1112.4,549.0 1112.5,553.3 1112.6,551.9 1112.8,541.0 1112.9,550.6 1113.0,544.2 1113.2,554.2 1113.3,548.5 1113.4,546.3 1113.5,543.1 1113.7,551.6 1113.8,544.7 1113.9,545.4 1114.1,549.8 1114.2,544.9 1114.3,550.3 1114.5,549.8 1114.6,546.8 1114.7,557.7 1114.9,547.3 1115.0,551.0 1115.1,552.9 1115.3,548.8 1115.4,544.2 1115.5,548.9 1115.7,542.4 1115.8,552.1 1115.9,552.8 1116.1,541.5 1116.2,546.2 1116.3,544.1 1116.5,551.2 1116.6,544.8 1116.7,547.0 1116.9,545.6 1117.0,548.1 1117.1,543.6 1117.3,550.9 1117.4,552.3 1117.5,554.4 1117.7,544.1 1117.8,551.6 1117.9,552.9 1118.1,552.6 1118.2,550.7 1118.3,554.0 1118.5,550.3 1118.6,551.7 1118.7,551.5 1118.9,553.1 1119.0,549.4 1119.1,551.4 1119.3,549.2 1119.4,548.8 1119.5,548.5 1119.6,558.3 1119.8,552.1 1119.9,553.1 1120.0,547.2 1120.2,556.3 1120.3,553.1 1120.4,551.5 1120.6,551.8 1120.7,546.8 1120.8,552.4 1121.0,547.1 1121.1,556.4 1121.2,557.8 1121.4,546.4 1121.5,549.4 1121.6,549.3 1121.8,550.8 1121.9,549.5 1122.0,559.4 1122.2,555.6 1122.3,564.2 1122.4,563.4 1122.6,566.3 1122.7,572.4 1122.8,570.6 1123.0,564.0 1123.1,567.8 1123.2,568.8 1123.4,567.3 1123.5,569.3 1123.6,569.9 1123.8,568.4 1123.9,568.5 1124.0,565.0 1124.2,569.2 1124.3,564.6 1124.4,565.1 1124.6,565.6 1124.7,567.5 1124.8,570.2 1125.0,570.4 1125.1,571.4 1125.2,572.9 1125.4,571.4 1125.5,572.9 1125.6,567.2 1125.7,570.1 1125.9,572.7 1126.0,576.4 1126.1,571.9 1126.3,572.9 1126.4,574.6 1126.5,574.8 1126.7,577.6 1126.8,570.8 1126.9,572.4 1127.1,566.1 1127.2,572.5 1127.3,572.9 1127.5,569.2 1127.6,572.4 1127.7,572.4 1127.9,573.8 1128.0,574.5 1128.1,569.5 1128.3,570.8 1128.4,569.2 1128.5,574.2 1128.7,573.4 1128.8,575.6 1128.9,571.4 1129.1,577.0 1129.2,572.4 1129.3,571.2 1129.5,570.5 1129.6,575.9 1129.7,571.2 1129.9,575.4 1130.0,575.5 1130.1,572.5 1130.3,560.5 1130.4,553.6 1130.5,556.4 1130.7,552.3 1130.8,550.5 1130.9,539.3 1131.1,545.0 1131.2,550.9 1131.3,555.6 1131.5,551.1 1131.6,543.6 1131.7,540.8 1131.8,549.0 1132.0,550.6 1132.1,549.7 1132.2,555.0 1132.4,543.8 1132.5,551.5 1132.6,542.8 1132.8,553.7 1132.9,551.8 1133.0,545.4 1133.2,549.5 1133.3,543.1 1133.4,546.1 1133.6,550.7 1133.7,543.3 1133.8,542.2 1134.0,553.3 1134.1,537.9 1134.2,543.2 1134.4,541.9 1134.5,552.5 1134.6,547.7 1134.8,546.0 1134.9,540.0 1135.0,550.3 1135.2,547.8 1135.3,552.4 1135.4,544.8 1135.6,542.2 1135.7,550.5 1135.8,546.2 1136.0,541.9 1136.1,537.8 1136.2,541.9 1136.4,546.1 1136.5,550.0 1136.6,549.3 1136.8,548.4 1136.9,545.4 1137.0,546.5 1137.2,539.9 1137.3,545.7 1137.4,551.4 1137.6,541.3 1137.7,543.9 1137.8,547.6 1137.9,551.1 1138.1,555.9 1138.2,552.8 1138.3,545.6 1138.5,552.5 1138.6,554.8 1138.7,549.2 1138.9,549.3 1139.0,548.2 1139.1,548.3 1139.3,545.7 1139.4,554.5 1139.5,550.9 1139.7,560.9 1139.8,558.3 1139.9,563.1 1140.1,566.0 1140.2,567.3 1140.3,569.9 1140.5,566.9 1140.6,567.5 1140.7,569.5 1140.9,571.3 1141.0,571.8 1141.1,571.2 1141.3,570.4 1141.4,569.9 1141.5,562.0 1141.7,568.1 1141.8,567.8 1141.9,572.1 1142.1,571.7 1142.2,570.7 1142.3,569.3 1142.5,572.6 1142.6,565.6 1142.7,571.3 1142.9,567.0 1143.0,576.0 1143.1,569.8 1143.3,569.1 1143.4,569.3 1143.5,568.2 1143.7,569.1 1143.8,566.5 1143.9,569.8 1144.0,563.4 1144.2,566.1 1144.3,553.0 1144.4,554.3 1144.6,556.2 1144.7,558.5 1144.8,557.8 1145.0,549.3 1145.1,549.9 1145.2,556.3 1145.4,551.7 1145.5,561.9 1145.6,563.2 1145.8,558.2 1145.9,559.7 1146.0,558.7 1146.2,556.2 1146.3,546.5 1146.4,559.4 1146.6,557.1 1146.7,558.6 1146.8,561.8 1147.0,561.1 1147.1,561.0 1147.2,571.8 1147.4,570.2 1147.5,571.3 1147.6,569.7 1147.8,574.6 1147.9,575.1 1148.0,576.6 1148.2,569.3 1148.3,570.1 1148.4,570.4 1148.6,576.7 1148.7,567.4 1148.8,564.5 1149.0,562.7 1149.1,557.0 1149.2,546.7 1149.4,547.1 1149.5,549.2 1149.6,546.9 1149.7,551.1 1149.9,548.3 1150.0,548.3 1150.1,546.1 1150.3,548.4 1150.4,548.6 1150.5,548.4 1150.7,550.2 1150.8,538.7 1150.9,545.3 1151.1,545.5 1151.2,537.9 1151.3,541.3 1151.5,553.0 1151.6,543.8 1151.7,543.1 1151.9,538.7 1152.0,540.8 1152.1,542.9 1152.3,550.6 1152.4,549.2 1152.5,544.4 1152.7,543.3 1152.8,549.4 1152.9,546.6 1153.1,546.5 1153.2,544.5 1153.3,543.2 1153.5,545.6 1153.6,549.4 1153.7,539.0 1153.9,537.4 1154.0,544.2 1154.1,539.4 1154.3,541.6 1154.4,541.0 1154.5,542.0 1154.7,547.4 1154.8,542.2 1154.9,540.7 1155.1,548.7 1155.2,537.3 1155.3,537.1 1155.5,538.5 1155.6,538.1 1155.7,543.4 1155.8,548.0 1156.0,549.3 1156.1,550.4 1156.2,547.0 1156.4,547.8 1156.5,545.3 1156.6,556.1 1156.8,539.4 1156.9,539.8 1157.0,549.1 1157.2,546.6 1157.3,547.7 1157.4,548.7 1157.6,550.8 1157.7,550.8 1157.8,553.7 1158.0,550.1 1158.1,551.2 1158.2,550.1 1158.4,556.9 1158.5,556.2 1158.6,558.7 1158.8,559.4 1158.9,567.0 1159.0,565.1 1159.2,563.9 1159.3,565.5 1159.4,568.6 1159.6,569.4 1159.7,569.1 1159.8,566.9 1160.0,565.2 1160.1,570.2 1160.2,571.9 1160.4,569.6 1160.5,570.2 1160.6,573.1 1160.8,572.8 1160.9,571.3 1161.0,569.4 1161.2,574.2 1161.3,573.9 1161.4,570.1 1161.6,574.6 1161.7,571.3 1161.8,570.8 1161.9,572.1 1162.1,574.4 1162.2,572.1 1162.3,572.9 1162.5,571.4 1162.6,574.3 1162.7,569.7 1162.9,576.5 1163.0,573.0 1163.1,572.7 1163.3,570.5 1163.4,574.3 1163.5,571.7 1163.7,574.3 1163.8,571.2 1163.9,568.8 1164.1,574.0 1164.2,572.0 1164.3,575.2 1164.5,570.7 1164.6,570.2 1164.7,573.0 1164.9,575.8 1165.0,572.1 1165.1,570.3 1165.3,570.5 1165.4,571.2 1165.5,577.5 1165.7,574.7 1165.8,569.8 1165.9,576.1 1166.1,570.5 1166.2,568.7 1166.3,571.4 1166.5,570.5 1166.6,574.0 1166.7,576.1 1166.9,573.5 1167.0,573.7 1167.1,573.3 1167.3,571.6 1167.4,573.6 1167.5,572.8 1167.7,572.3 1167.8,573.3 1167.9,568.9 1168.0,572.3 1168.2,573.1 1168.3,573.8 1168.4,574.8 1168.6,570.2 1168.7,573.0 1168.8,575.9 1169.0,572.1 1169.1,568.2 1169.2,566.4 1169.4,558.9 1169.5,563.4 1169.6,555.1 1169.8,553.6 1169.9,555.8 1170.0,550.9 1170.2,551.2 1170.3,548.6 1170.4,552.0 1170.6,548.8 1170.7,556.1 1170.8,553.6 1171.0,546.1 1171.1,544.8 1171.2,548.6 1171.4,550.6 1171.5,543.8 1171.6,556.0 1171.8,550.6 1171.9,544.5 1172.0,544.3 1172.2,550.8 1172.3,554.4 1172.4,541.2 1172.6,546.6 1172.7,551.0 1172.8,547.4 1173.0,544.2 1173.1,558.2 1173.2,543.8 1173.4,545.4 1173.5,556.7 1173.6,545.7 1173.8,555.9 1173.9,544.7 1174.0,547.8 1174.1,540.8 1174.3,552.0 1174.4,549.9 1174.5,546.1 1174.7,552.7 1174.8,553.1 1174.9,552.1 1175.1,551.1 1175.2,555.1 1175.3,549.4 1175.5,549.4 1175.6,551.3 1175.7,545.4 1175.9,553.2 1176.0,547.3 1176.1,554.4 1176.3,549.8 1176.4,559.9 1176.5,552.2 1176.7,553.8 1176.8,555.1 1176.9,555.9 1177.1,555.4 1177.2,557.1 1177.3,562.7 1177.5,557.4 1177.6,557.6 1177.7,557.9 1177.9,560.2 1178.0,557.3 1178.1,554.5 1178.3,558.5 1178.4,559.7 1178.5,553.8 1178.7,555.5 1178.8,556.1 1178.9,555.8 1179.1,561.1 1179.2,560.8 1179.3,557.2 1179.5,563.0 1179.6,561.9 1179.7,560.8 1179.8,561.2 1180.0,563.6 1180.1,560.1 1180.2,564.1 1180.4,561.7 1180.5,561.1 1180.6,562.7 1180.8,562.9 1180.9,568.9 1181.0,569.6 1181.2,567.9 1181.3,565.1 1181.4,562.6 1181.6,570.6 1181.7,566.7 1181.8,570.3 1182.0,570.2 1182.1,569.3 1182.2,567.1 1182.4,568.7 1182.5,566.5 1182.6,572.5 1182.8,568.0 1182.9,568.3 1183.0,570.8" fill="none" stroke="#0000ff" stroke-width="1.7" stroke-linejoin="round" clip-path="url(#c3)"/>
<rect x="1116.0" y="520.4" width="66.2" height="15.4" rx="2" ry="2" fill="#ffffff" fill-opacity="0.8" stroke="#cccccc" stroke-width="1"/>
<line x1="1118.3" y1="527.8" x2="1139.8" y2="527.8" stroke="#0000ff" stroke-width="1.5"/>
<text x="1144.20" y="531.00" font-size="10.5" textLength="33.10" lengthAdjust="spacingAndGlyphs" fill="#000" >y=517</text>
<rect x="911.1" y="688.9" width="273.9" height="120.10000000000002" fill="none" stroke="#111111" stroke-width="1.9"/>
<line x1="913.00" y1="809.00" x2="913.00" y2="816.00" stroke="#111111" stroke-width="1.8"/>
<text x="910.27" y="831.30" font-size="10.5" textLength="5.46" lengthAdjust="spacingAndGlyphs" fill="#000" >0</text>
<line x1="965.00" y1="809.00" x2="965.00" y2="816.00" stroke="#111111" stroke-width="1.8"/>
<text x="955.91" y="831.30" font-size="10.5" textLength="18.18" lengthAdjust="spacingAndGlyphs" fill="#000" >200</text>
<line x1="1017.00" y1="809.00" x2="1017.00" y2="816.00" stroke="#111111" stroke-width="1.8"/>
<text x="1007.91" y="831.30" font-size="10.5" textLength="18.18" lengthAdjust="spacingAndGlyphs" fill="#000" >400</text>
<line x1="1069.00" y1="809.00" x2="1069.00" y2="816.00" stroke="#111111" stroke-width="1.8"/>
<text x="1059.91" y="831.30" font-size="10.5" textLength="18.18" lengthAdjust="spacingAndGlyphs" fill="#000" >600</text>
<line x1="1121.00" y1="809.00" x2="1121.00" y2="816.00" stroke="#111111" stroke-width="1.8"/>
<text x="1111.91" y="831.30" font-size="10.5" textLength="18.18" lengthAdjust="spacingAndGlyphs" fill="#000" >800</text>
<line x1="1173.00" y1="809.00" x2="1173.00" y2="816.00" stroke="#111111" stroke-width="1.8"/>
<text x="1160.73" y="831.30" font-size="10.5" textLength="24.54" lengthAdjust="spacingAndGlyphs" fill="#000" >1000</text>
<line x1="904.10" y1="783.60" x2="911.10" y2="783.60" stroke="#111111" stroke-width="1.8"/>
<text x="878.12" y="787.50" font-size="10.5" textLength="18.18" lengthAdjust="spacingAndGlyphs" fill="#000" >100</text>
<line x1="904.10" y1="744.20" x2="911.10" y2="744.20" stroke="#111111" stroke-width="1.8"/>
<text x="878.12" y="748.10" font-size="10.5" textLength="18.18" lengthAdjust="spacingAndGlyphs" fill="#000" >200</text>
<line x1="904.10" y1="704.80" x2="911.10" y2="704.80" stroke="#111111" stroke-width="1.8"/>
<text x="878.12" y="708.70" font-size="10.5" textLength="18.18" lengthAdjust="spacingAndGlyphs" fill="#000" >300</text>
<text x="1044.30" y="849.50" font-size="10.5" textLength="9.00" lengthAdjust="spacingAndGlyphs" fill="#000" >Y</text>
<text x="0" y="0" font-size="10.5" text-anchor="middle" dominant-baseline="central" textLength="33.80" lengthAdjust="spacingAndGlyphs" fill="#000" transform="translate(862.60,751.10) rotate(-90)">counts</text>
<text x="0" y="0" font-size="10.5" text-anchor="middle" dominant-baseline="central" textLength="38.70" lengthAdjust="spacingAndGlyphs" fill="#000" transform="translate(1197.50,749.45) rotate(90)">cut in y</text>
<defs><clipPath id="c4"><rect x="911.1" y="688.9" width="273.9" height="120.10000000000002"/></clipPath></defs>
<polyline points="913.0,811.2 913.3,811.2 913.5,811.2 913.8,752.4 914.0,754.2 914.3,755.1 914.6,753.9 914.8,754.3 915.1,748.1 915.3,754.0 915.6,750.2 915.9,752.8 916.1,752.6 916.4,751.8 916.6,754.5 916.9,751.5 917.2,752.4 917.4,755.7 917.7,752.0 917.9,752.1 918.2,752.2 918.5,750.2 918.7,753.7 919.0,752.1 919.2,751.7 919.5,754.6 919.8,750.8 920.0,755.5 920.3,755.2 920.5,752.0 920.8,754.8 921.1,753.1 921.3,755.8 921.6,752.8 921.8,754.9 922.1,752.2 922.4,755.5 922.6,752.0 922.9,753.3 923.1,752.7 923.4,752.9 923.7,752.6 923.9,755.1 924.2,757.3 924.4,752.7 924.7,754.4 925.0,753.5 925.2,752.0 925.5,756.2 925.7,754.1 926.0,753.8 926.3,754.6 926.5,752.1 926.8,752.9 927.0,754.1 927.3,754.4 927.6,751.2 927.8,753.8 928.1,751.6 928.3,751.8 928.6,756.0 928.9,754.5 929.1,752.6 929.4,751.9 929.6,751.1 929.9,751.1 930.2,750.7 930.4,753.2 930.7,752.9 930.9,751.1 931.2,753.3 931.5,750.6 931.7,755.3 932.0,751.3 932.2,752.8 932.5,756.0 932.8,750.7 933.0,751.9 933.3,752.4 933.5,754.4 933.8,753.2 934.1,749.7 934.3,753.9 934.6,758.7 934.8,753.9 935.1,754.5 935.4,752.6 935.6,753.1 935.9,754.0 936.1,753.9 936.4,750.4 936.7,754.9 936.9,748.7 937.2,753.3 937.4,754.3 937.7,750.9 938.0,751.3 938.2,754.2 938.5,750.9 938.7,755.6 939.0,753.9 939.3,750.2 939.5,752.7 939.8,754.6 940.0,751.3 940.3,750.5 940.6,752.3 940.8,755.5 941.1,752.8 941.3,751.4 941.6,750.8 941.9,748.8 942.1,752.7 942.4,753.1 942.6,752.3 942.9,750.0 943.2,753.9 943.4,749.8 943.7,757.2 943.9,750.7 944.2,753.4 944.5,751.3 944.7,750.9 945.0,754.3 945.2,752.3 945.5,751.7 945.8,751.0 946.0,753.8 946.3,754.0 946.5,755.7 946.8,747.4 947.1,752.5 947.3,752.5 947.6,754.9 947.8,750.4 948.1,753.1 948.4,749.5 948.6,750.5 948.9,752.1 949.1,750.8 949.4,754.1 949.7,752.7 949.9,753.2 950.2,754.4 950.4,752.1 950.7,752.4 951.0,749.4 951.2,758.3 951.5,753.3 951.7,753.8 952.0,752.9 952.3,751.3 952.5,751.3 952.8,752.0 953.0,753.0 953.3,751.2 953.6,751.4 953.8,755.5 954.1,752.6 954.3,754.6 954.6,754.3 954.9,751.8 955.1,752.0 955.4,751.9 955.6,753.7 955.9,752.5 956.2,753.8 956.4,751.4 956.7,750.8 956.9,748.9 957.2,749.8 957.5,753.6 957.7,752.9 958.0,753.8 958.2,751.5 958.5,748.4 958.8,750.8 959.0,756.2 959.3,754.4 959.5,754.5 959.8,751.2 960.1,752.1 960.3,751.6 960.6,748.8 960.8,753.7 961.1,753.7 961.4,748.5 961.6,751.5 961.9,753.6 962.1,755.9 962.4,755.0 962.7,756.7 962.9,752.0 963.2,752.1 963.4,750.3 963.7,752.4 964.0,753.5 964.2,753.5 964.5,748.7 964.7,755.4 965.0,751.9 965.3,752.2 965.5,751.1 965.8,753.0 966.0,751.3 966.3,750.7 966.6,752.5 966.8,753.1 967.1,752.6 967.3,754.0 967.6,752.6 967.9,752.8 968.1,751.9 968.4,749.8 968.6,749.9 968.9,753.1 969.2,751.2 969.4,751.8 969.7,750.9 969.9,752.3 970.2,751.8 970.5,753.2 970.7,753.8 971.0,750.8 971.2,750.0 971.5,751.2 971.8,751.6 972.0,751.9 972.3,753.2 972.5,755.6 972.8,751.2 973.1,752.1 973.3,753.4 973.6,754.2 973.8,750.1 974.1,755.7 974.4,749.3 974.6,751.3 974.9,748.2 975.1,753.8 975.4,752.5 975.7,753.4 975.9,752.2 976.2,752.9 976.4,753.9 976.7,750.6 977.0,754.0 977.2,753.5 977.5,751.6 977.7,753.5 978.0,753.4 978.3,752.0 978.5,753.3 978.8,754.8 979.0,752.8 979.3,753.0 979.6,749.6 979.8,754.6 980.1,750.9 980.3,754.1 980.6,753.3 980.9,753.3 981.1,752.2 981.4,751.2 981.6,749.6 981.9,753.9 982.2,750.4 982.4,751.0 982.7,751.3 982.9,754.1 983.2,751.2 983.5,753.0 983.7,752.2 984.0,753.3 984.2,751.7 984.5,750.9 984.8,750.9 985.0,753.2 985.3,751.1 985.5,750.3 985.8,754.6 986.1,750.3 986.3,755.3 986.6,752.0 986.8,751.9 987.1,750.4 987.4,752.5 987.6,753.8 987.9,754.4 988.1,755.2 988.4,751.7 988.7,753.5 988.9,754.3 989.2,752.1 989.4,754.4 989.7,753.9 990.0,753.9 990.2,750.2 990.5,750.5 990.7,753.4 991.0,755.9 991.3,752.7 991.5,753.0 991.8,752.6 992.0,752.2 992.3,753.8 992.6,751.6 992.8,751.8 993.1,752.9 993.3,754.0 993.6,754.1 993.9,739.9 994.1,744.8 994.4,742.3 994.6,743.9 994.9,745.6 995.2,740.2 995.4,741.9 995.7,741.7 995.9,739.4 996.2,745.9 996.5,742.0 996.7,741.0 997.0,739.6 997.2,744.8 997.5,739.9 997.8,741.2 998.0,738.1 998.3,738.7 998.5,740.3 998.8,736.0 999.1,741.8 999.3,743.0 999.6,742.8 999.8,744.4 1000.1,741.9 1000.4,747.0 1000.6,742.1 1000.9,740.7 1001.1,739.1 1001.4,742.8 1001.7,738.0 1001.9,743.6 1002.2,742.2 1002.4,747.0 1002.7,743.9 1003.0,744.0 1003.2,737.9 1003.5,740.4 1003.7,744.8 1004.0,740.4 1004.3,740.6 1004.5,742.5 1004.8,741.8 1005.0,742.6 1005.3,743.3 1005.6,746.6 1005.8,742.1 1006.1,738.4 1006.3,738.0 1006.6,742.6 1006.9,743.8 1007.1,742.4 1007.4,739.4 1007.6,740.9 1007.9,743.4 1008.2,740.9 1008.4,742.4 1008.7,740.5 1008.9,742.9 1009.2,745.8 1009.5,741.7 1009.7,739.8 1010.0,744.8 1010.2,742.1 1010.5,739.5 1010.8,742.8 1011.0,743.6 1011.3,736.4 1011.5,739.6 1011.8,739.1 1012.1,744.4 1012.3,737.5 1012.6,746.2 1012.8,743.2 1013.1,739.9 1013.4,738.3 1013.6,744.3 1013.9,743.6 1014.1,741.3 1014.4,747.0 1014.7,740.1 1014.9,740.3 1015.2,743.0 1015.4,740.4 1015.7,739.8 1016.0,741.0 1016.2,740.5 1016.5,737.8 1016.7,743.1 1017.0,741.4 1017.3,743.2 1017.5,739.1 1017.8,742.9 1018.0,740.6 1018.3,741.5 1018.6,741.7 1018.8,737.3 1019.1,742.1 1019.3,738.1 1019.6,739.7 1019.9,738.3 1020.1,742.3 1020.4,739.4 1020.6,739.8 1020.9,743.5 1021.2,741.1 1021.4,742.2 1021.7,741.9 1021.9,738.4 1022.2,743.7 1022.5,746.3 1022.7,746.4 1023.0,743.0 1023.2,743.5 1023.5,741.8 1023.8,740.3 1024.0,737.2 1024.3,741.0 1024.5,740.6 1024.8,743.8 1025.1,740.3 1025.3,738.3 1025.6,738.3 1025.8,747.0 1026.1,739.5 1026.4,737.7 1026.6,739.7 1026.9,745.8 1027.1,742.6 1027.4,740.3 1027.7,740.7 1027.9,744.0 1028.2,744.2 1028.4,739.3 1028.7,745.3 1029.0,738.1 1029.2,741.8 1029.5,741.0 1029.7,745.3 1030.0,743.4 1030.3,740.0 1030.5,745.7 1030.8,736.4 1031.0,745.5 1031.3,745.0 1031.6,741.7 1031.8,740.6 1032.1,739.9 1032.3,742.8 1032.6,742.4 1032.9,742.5 1033.1,743.3 1033.4,748.6 1033.6,739.3 1033.9,741.2 1034.2,741.4 1034.4,743.5 1034.7,741.2 1034.9,741.9 1035.2,742.0 1035.5,738.9 1035.7,746.4 1036.0,741.2 1036.2,744.6 1036.5,742.7 1036.8,737.9 1037.0,744.7 1037.3,742.1 1037.5,743.4 1037.8,739.3 1038.1,744.4 1038.3,746.2 1038.6,740.5 1038.8,742.8 1039.1,742.7 1039.4,739.0 1039.6,744.2 1039.9,742.8 1040.1,741.4 1040.4,740.8 1040.7,743.2 1040.9,739.1 1041.2,736.0 1041.4,742.9 1041.7,736.9 1042.0,747.4 1042.2,738.1 1042.5,742.7 1042.7,741.5 1043.0,742.7 1043.3,743.5 1043.5,745.2 1043.8,742.9 1044.0,738.4 1044.3,738.8 1044.6,742.7 1044.8,743.2 1045.1,743.7 1045.3,745.0 1045.6,737.1 1045.9,740.1 1046.1,741.5 1046.4,743.1 1046.6,744.5 1046.9,738.4 1047.2,739.8 1047.4,744.3 1047.7,739.2 1047.9,744.7 1048.2,740.2 1048.5,744.4 1048.7,742.9 1049.0,740.5 1049.2,740.7 1049.5,739.2 1049.8,744.0 1050.0,737.7 1050.3,738.3 1050.5,741.9 1050.8,740.6 1051.1,743.9 1051.3,742.2 1051.6,745.3 1051.8,741.6 1052.1,741.3 1052.4,738.3 1052.6,739.4 1052.9,739.7 1053.1,742.8 1053.4,742.4 1053.7,742.7 1053.9,741.3 1054.2,746.9 1054.4,739.8 1054.7,745.9 1055.0,743.2 1055.2,741.8 1055.5,743.2 1055.7,737.5 1056.0,742.1 1056.3,737.7 1056.5,738.8 1056.8,743.1 1057.0,740.8 1057.3,738.4 1057.6,742.7 1057.8,741.6 1058.1,743.3 1058.3,741.7 1058.6,742.8 1058.9,741.6 1059.1,739.2 1059.4,738.2 1059.6,741.5 1059.9,741.3 1060.2,739.6 1060.4,742.6 1060.7,744.6 1060.9,738.9 1061.2,744.3 1061.5,739.4 1061.7,744.4 1062.0,737.0 1062.2,744.6 1062.5,739.6 1062.8,737.9 1063.0,744.4 1063.3,737.9 1063.5,744.0 1063.8,746.5 1064.1,739.9 1064.3,740.0 1064.6,742.4 1064.8,748.5 1065.1,742.0 1065.4,742.6 1065.6,742.8 1065.9,742.6 1066.1,746.5 1066.4,743.3 1066.7,737.1 1066.9,737.8 1067.2,742.8 1067.4,743.7 1067.7,740.8 1068.0,739.1 1068.2,739.9 1068.5,744.9 1068.7,741.4 1069.0,741.5 1069.3,738.1 1069.5,738.7 1069.8,740.5 1070.0,738.6 1070.3,742.9 1070.6,737.8 1070.8,743.0 1071.1,740.8 1071.3,739.4 1071.6,744.2 1071.9,743.7 1072.1,746.4 1072.4,741.4 1072.6,742.0 1072.9,742.7 1073.2,740.5 1073.4,747.4 1073.7,741.9 1073.9,741.6 1074.2,742.5 1074.5,739.8 1074.7,737.2 1075.0,743.0 1075.2,744.3 1075.5,743.4 1075.8,741.6 1076.0,740.3 1076.3,744.1 1076.5,739.2 1076.8,744.5 1077.1,739.7 1077.3,740.7 1077.6,740.6 1077.8,736.2 1078.1,742.5 1078.4,742.3 1078.6,740.6 1078.9,739.6 1079.1,745.3 1079.4,741.1 1079.7,743.8 1079.9,740.2 1080.2,738.2 1080.4,741.7 1080.7,742.1 1081.0,741.4 1081.2,749.6 1081.5,739.8 1081.7,740.4 1082.0,741.4 1082.3,742.9 1082.5,743.8 1082.8,742.3 1083.0,738.7 1083.3,742.1 1083.6,738.3 1083.8,748.6 1084.1,743.0 1084.3,741.1 1084.6,741.9 1084.9,746.2 1085.1,743.6 1085.4,738.6 1085.6,745.2 1085.9,744.4 1086.2,744.7 1086.4,743.3 1086.7,740.2 1086.9,740.3 1087.2,747.2 1087.5,738.0 1087.7,743.4 1088.0,743.4 1088.2,737.5 1088.5,742.0 1088.8,745.1 1089.0,743.5 1089.3,743.7 1089.5,744.5 1089.8,742.7 1090.1,739.5 1090.3,740.9 1090.6,745.5 1090.8,734.5 1091.1,744.4 1091.4,741.5 1091.6,741.8 1091.9,739.8 1092.1,742.7 1092.4,740.6 1092.7,736.3 1092.9,741.6 1093.2,744.7 1093.4,741.0 1093.7,743.9 1094.0,742.8 1094.2,741.3 1094.5,741.0 1094.7,742.6 1095.0,739.6 1095.3,742.3 1095.5,745.3 1095.8,739.5 1096.0,742.8 1096.3,738.7 1096.6,743.6 1096.8,740.3 1097.1,741.0 1097.3,748.9 1097.6,745.7 1097.9,744.8 1098.1,738.1 1098.4,746.8 1098.6,739.4 1098.9,739.0 1099.2,740.5 1099.4,740.1 1099.7,743.1 1099.9,741.9 1100.2,741.2 1100.5,740.7 1100.7,740.0 1101.0,742.4 1101.2,743.7 1101.5,743.3 1101.8,740.8 1102.0,746.2 1102.3,745.1 1102.5,742.9 1102.8,743.3 1103.1,742.5 1103.3,748.8 1103.6,742.7 1103.8,742.5 1104.1,739.8 1104.4,747.0 1104.6,742.6 1104.9,740.6 1105.1,740.6 1105.4,738.7 1105.7,739.1 1105.9,744.6 1106.2,740.2 1106.4,742.7 1106.7,743.9 1107.0,737.8 1107.2,743.5 1107.5,744.1 1107.7,742.9 1108.0,744.1 1108.3,739.2 1108.5,740.8 1108.8,738.2 1109.0,740.8 1109.3,743.5 1109.6,739.1 1109.8,743.6 1110.1,743.0 1110.3,742.3 1110.6,741.7 1110.9,738.7 1111.1,743.4 1111.4,740.9 1111.6,741.9 1111.9,745.1 1112.2,744.7 1112.4,742.4 1112.7,740.8 1112.9,741.0 1113.2,740.6 1113.5,741.7 1113.7,743.0 1114.0,740.7 1114.2,744.5 1114.5,745.4 1114.8,742.7 1115.0,745.6 1115.3,743.2 1115.5,743.8 1115.8,743.3 1116.1,742.0 1116.3,743.9 1116.6,742.9 1116.8,746.3 1117.1,741.5 1117.4,744.2 1117.6,740.8 1117.9,749.3 1118.1,743.9 1118.4,741.2 1118.7,748.3 1118.9,742.8 1119.2,741.6 1119.4,741.6 1119.7,745.8 1120.0,741.2 1120.2,741.4 1120.5,744.4 1120.7,739.9 1121.0,742.0 1121.3,741.8 1121.5,743.0 1121.8,740.4 1122.0,741.6 1122.3,738.8 1122.6,740.6 1122.8,743.5 1123.1,742.4 1123.3,739.4 1123.6,742.8 1123.9,740.8 1124.1,740.5 1124.4,742.3 1124.6,748.0 1124.9,741.5 1125.2,741.3 1125.4,741.5 1125.7,743.8 1125.9,738.6 1126.2,742.2 1126.5,743.5 1126.7,743.7 1127.0,740.9 1127.2,744.7 1127.5,744.5 1127.8,736.6 1128.0,738.4 1128.3,739.1 1128.5,738.2 1128.8,740.3 1129.1,746.3 1129.3,738.7 1129.6,738.6 1129.8,740.5 1130.1,747.0 1130.4,738.6 1130.6,738.2 1130.9,743.1 1131.1,741.5 1131.4,739.8 1131.7,742.1 1131.9,738.9 1132.2,741.6 1132.4,740.0 1132.7,741.6 1133.0,745.7 1133.2,744.5 1133.5,733.5 1133.7,741.1 1134.0,738.4 1134.3,738.8 1134.5,737.3 1134.8,740.4 1135.0,743.4 1135.3,741.8 1135.6,746.9 1135.8,742.3 1136.1,739.4 1136.3,747.6 1136.6,741.3 1136.9,739.7 1137.1,738.3 1137.4,744.3 1137.6,743.6 1137.9,746.8 1138.2,744.5 1138.4,740.4 1138.7,736.4 1138.9,744.9 1139.2,738.2 1139.5,740.7 1139.7,743.1 1140.0,736.0 1140.2,748.5 1140.5,742.0 1140.8,741.3 1141.0,736.2 1141.3,737.1 1141.5,735.8 1141.8,741.5 1142.1,739.2 1142.3,738.2 1142.6,740.5 1142.8,740.9 1143.1,742.3 1143.4,742.9 1143.6,745.1 1143.9,736.7 1144.1,743.0 1144.4,747.4 1144.7,741.1 1144.9,741.9 1145.2,741.4 1145.4,737.0 1145.7,742.1 1146.0,742.5 1146.2,743.8 1146.5,741.9 1146.7,743.0 1147.0,741.3 1147.3,733.5 1147.5,740.8 1147.8,744.1 1148.0,736.7 1148.3,739.5 1148.6,739.7 1148.8,739.9 1149.1,739.7 1149.3,740.0 1149.6,738.1 1149.9,739.2 1150.1,738.3 1150.4,743.2 1150.6,741.8 1150.9,743.8 1151.2,739.3 1151.4,739.6 1151.7,743.1 1151.9,740.3 1152.2,734.9 1152.5,738.6 1152.7,744.8 1153.0,742.1 1153.2,740.1 1153.5,741.9 1153.8,740.8 1154.0,738.7 1154.3,741.0 1154.5,744.8 1154.8,739.9 1155.1,742.1 1155.3,741.5 1155.6,743.3 1155.8,745.5 1156.1,745.1 1156.4,742.8 1156.6,744.7 1156.9,749.1 1157.1,738.8 1157.4,744.9 1157.7,743.8 1157.9,740.4 1158.2,748.2 1158.4,738.3 1158.7,743.9 1159.0,740.1 1159.2,743.1 1159.5,741.0 1159.7,741.6 1160.0,741.8 1160.3,746.7 1160.5,745.7 1160.8,741.9 1161.0,738.1 1161.3,743.3 1161.6,740.4 1161.8,741.4 1162.1,740.6 1162.3,739.2 1162.6,745.8 1162.9,741.1 1163.1,742.3 1163.4,742.7 1163.6,744.1 1163.9,743.9 1164.2,744.6 1164.4,744.8 1164.7,735.2 1164.9,737.3 1165.2,741.8 1165.5,739.9 1165.7,744.4 1166.0,749.2 1166.2,746.7 1166.5,741.5 1166.8,738.0 1167.0,741.9 1167.3,744.5 1167.5,742.5 1167.8,744.5 1168.1,745.5 1168.3,742.5 1168.6,742.9 1168.8,744.0 1169.1,744.2 1169.4,744.3 1169.6,741.2 1169.9,738.1 1170.1,742.4 1170.4,735.9 1170.7,746.1 1170.9,741.1 1171.2,744.9 1171.4,742.3 1171.7,741.6 1172.0,740.3 1172.2,738.8 1172.5,743.3 1172.7,745.1 1173.0,742.3 1173.3,741.1 1173.5,743.7 1173.8,739.5 1174.0,737.4 1174.3,745.6 1174.6,740.9 1174.8,739.1 1175.1,746.9 1175.3,741.3 1175.6,742.4 1175.9,745.6 1176.1,738.3 1176.4,741.3 1176.6,743.1 1176.9,740.7 1177.2,740.1 1177.4,739.8 1177.7,740.3 1177.9,740.7 1178.2,745.0 1178.5,743.0 1178.7,741.5 1179.0,749.2 1179.2,736.2 1179.5,742.8 1179.8,744.6 1180.0,746.7 1180.3,741.2 1180.5,741.8 1180.8,743.4 1181.1,755.9 1181.3,756.8 1181.6,756.5" fill="none" stroke="#0000ff" stroke-width="1.8" stroke-linejoin="round" clip-path="url(#c4)"/>
<rect x="1108.7" y="691.6" width="73.7" height="16.4" rx="2" ry="2" fill="#ffffff" fill-opacity="0.8" stroke="#cccccc" stroke-width="1"/>
<line x1="1111.2" y1="700.0" x2="1133.8" y2="700.0" stroke="#0000ff" stroke-width="1.5"/>
<text x="1137.20" y="703.00" font-size="10.5" textLength="39.60" lengthAdjust="spacingAndGlyphs" fill="#000" >x=1024</text>
<rect x="1" y="849" width="1243" height="20" fill="#ebebeb"/>
<text x="6.40" y="864.10" font-size="11.6" textLength="172.70" lengthAdjust="spacingAndGlyphs" fill="#000" >powered by QC: www.eso.org/HC</text>
<text x="936.00" y="864.10" font-size="11.6" textLength="302.50" lengthAdjust="spacingAndGlyphs" fill="#000" >created by qc_rawdisp.py v1.2.3 on 2024-11-24T01:19:39</text>
</svg>
<script>
(function(){
var c=document.getElementById('hm'); if(!c||!c.getContext) return;
var ctx=c.getContext('2d'); var W=570,H=288; var F=1; var W2=Math.round(W*F), H2=Math.round(H*F);
var off=document.createElement('canvas'); off.width=W2; off.height=H2; var octx=off.getContext('2d');
var img=octx.createImageData(W2,H2); var d=img.data;
var s=20241123>>>0;
function rnd(){ s^=s<<13; s>>>=0; s^=s>>>17; s^=s<<5; s>>>=0; return (s>>>0)/4294967296; }
function g(){ var u=rnd(); if(u<1e-12)u=1e-12; var v=rnd(); return Math.sqrt(-2*Math.log(u))*Math.cos(6.283185307*v); }
var P=[[0, 178], [410, 178], [440, 181], [465, 184], [490, 188], [525, 191], [570, 193], [650, 195], [720, 197], [800, 199], [838, 200], [839, 201], [842, 265], [858, 270], [861, 203], [930, 203], [940, 212], [955, 215], [968, 210], [975, 203], [1052, 203], [1058, 222], [1070, 228], [1080, 222], [1087, 204], [1163, 203], [1170, 199], [1222, 200], [1230, 214], [1250, 212], [1272, 207], [1280, 200], [1335, 202], [1342, 240], [1360, 245], [1385, 238], [1393, 214], [1440, 211], [1450, 203], [1478, 203], [1482, 252], [1530, 262], [1586, 250], [1590, 212], [1610, 200], [1640, 193], [1647, 193], [1652, 255], [1690, 270], [1718, 250], [1724, 203], [1750, 203], [1755, 240], [1772, 235], [1778, 201], [1787, 201], [1792, 255], [1830, 270], [1860, 250], [1866, 212], [1876, 201], [1900, 195], [1940, 194], [1948, 250], [1965, 262], [2000, 245], [2030, 215], [2047, 200]];
function prof(x){ if(x<=P[0][0]) return P[0][1]; for(var i=1;i<P.length;i++){ if(x<=P[i][0]){ var a=P[i-1],b=P[i]; return a[1]+(b[1]-a[1])*(x-a[0])/(b[0]-a[0]); } } return P[P.length-1][1]; }
var vmin=163.07, vmax=214.9;
for(var j=0;j<H2;j++){
  var yd=(605.0-(317+(j+0.5)/F))/0.2785;
  for(var i=0;i<W2;i++){
    var xd=(106+(i+0.5)/F-105.9)/0.2785;
    var yb=309.0-5.4*xd/2048;
    var v;
    if(yd<yb){ v=178.8; }
    else {
      var sh=(1033-yd)*0.015;
      v=prof(xd<700?xd-sh:xd);
      if(xd<450){ v+= 4*Math.max(0,(yd-600)/433)*Math.max(0,1-xd/450); }
      var ex=(xd-2130)/162, ey=(yd-300)/140; var r=Math.sqrt(ex*ex+ey*ey);
      if(r<1.2){ var m=Math.min(1,(1.2-r)/0.4); v=v*(1-m)+178.8*m; }
      if(Math.abs(yd-633.8)<1.7 && xd>413 && xd<1225) v-=9;
      if(Math.abs(yd-870.7)<1.7 && xd>1846 && xd<1875) v-=25;
    }
    if(yd>309.0 && yd<312.2 && xd<500) v=240;
    var sg=Math.sqrt(18+2.8*Math.max(0,v-178));
    v+=g()*sg;
    var t=(v-vmin)/(vmax-vmin); if(t<0)t=0; if(t>1)t=1;
    var r_,g_,b_;
    if(t<0.365079){ r_=0.0416+0.9584*t/0.365079; g_=0; b_=0; }
    else if(t<0.746032){ r_=1; g_=(t-0.365079)/0.380953; b_=0; }
    else { r_=1; g_=1; b_=(t-0.746032)/0.253968; }
    var k=(j*W2+i)*4; d[k]=r_*255; d[k+1]=g_*255; d[k+2]=b_*255; d[k+3]=255;
  }
}
octx.putImageData(img,0,0);
ctx.imageSmoothingEnabled=true; ctx.imageSmoothingQuality='high';
ctx.drawImage(off,0,0,W2,H2,0,0,W,H);
})();
</script>
</body></html>
